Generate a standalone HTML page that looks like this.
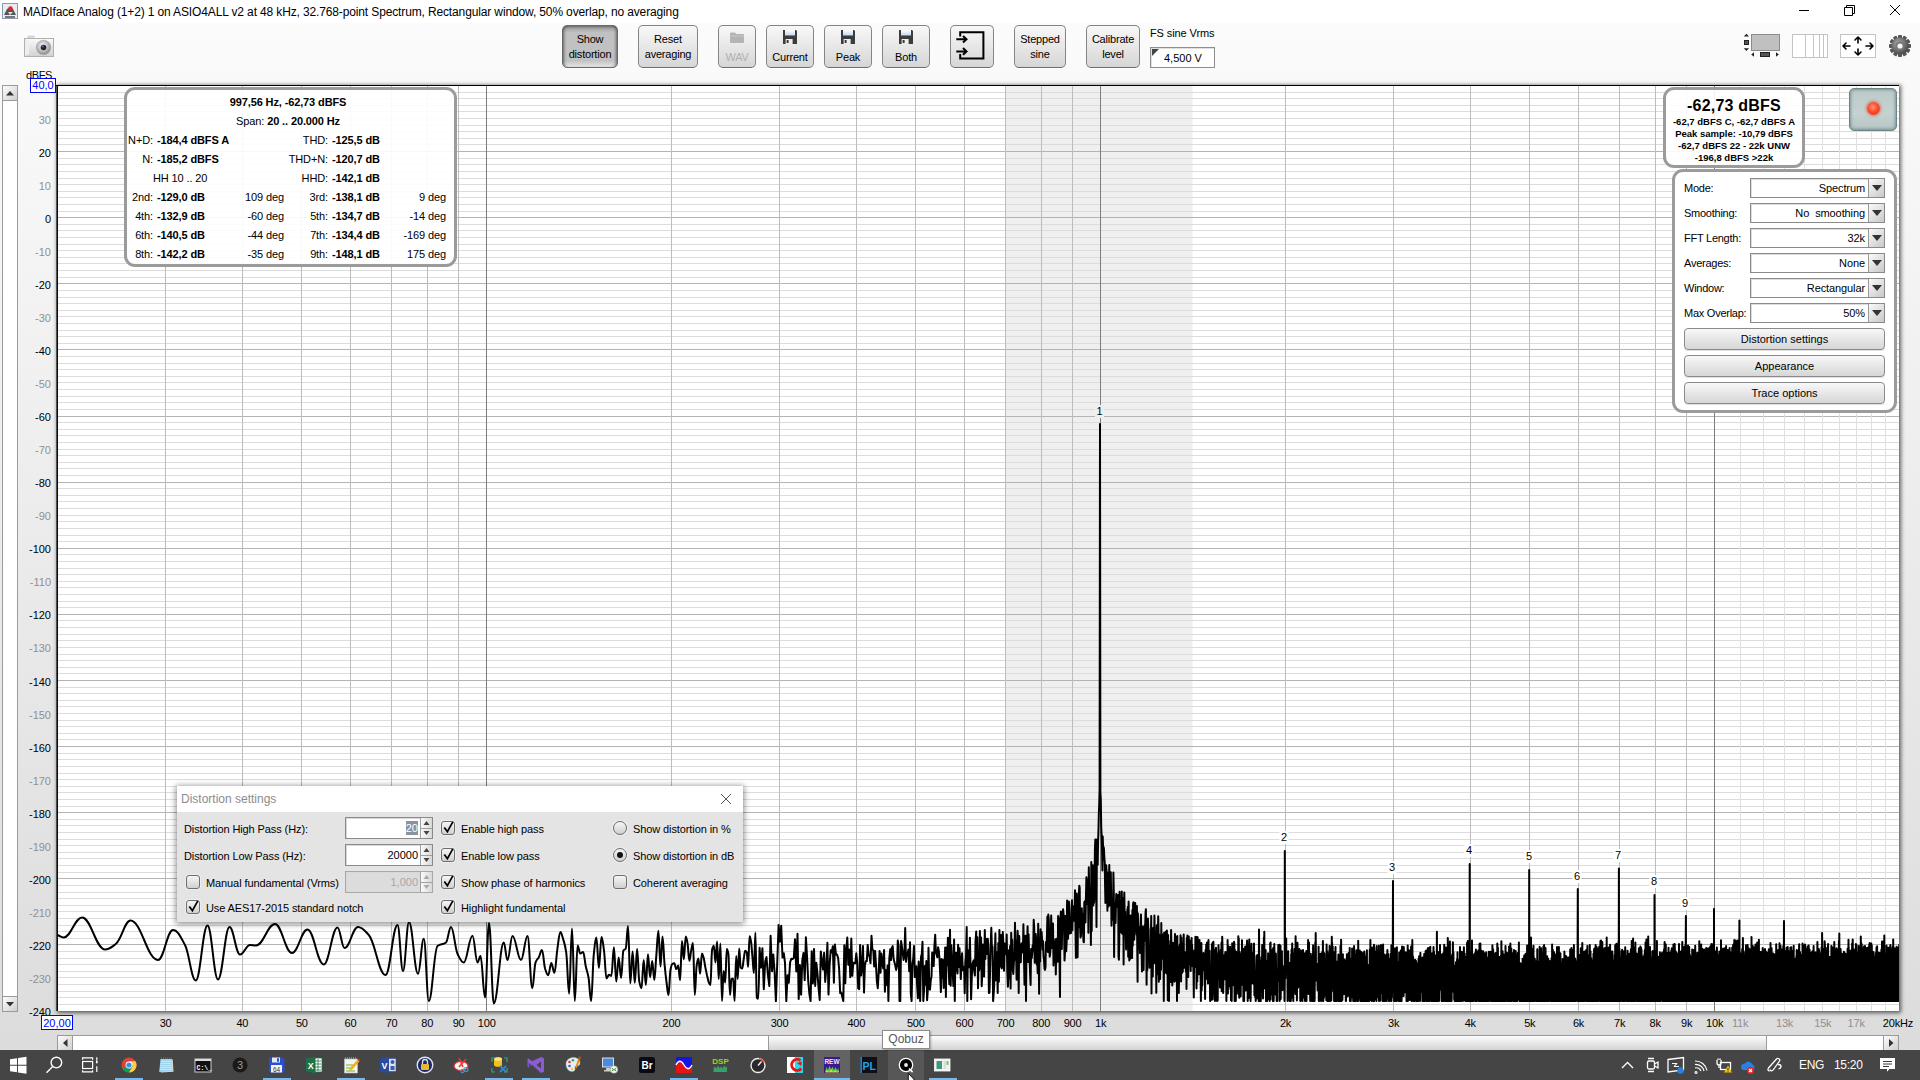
<!DOCTYPE html><html><head><meta charset="utf-8"><title>REW Spectrum</title><style>*{box-sizing:border-box;margin:0;padding:0}
html,body{width:1920px;height:1080px;overflow:hidden}
body{position:relative;font-family:"Liberation Sans",Arial,sans-serif;font-size:11px;color:#000;
 background:linear-gradient(to bottom,#fff 0,#fff 23px,#fbfbfb 23px,#dcdcdc 1050px,#dcdcdc 100%)}
.abs{position:absolute}
#plotshadow{position:absolute;left:57px;top:85px;width:1842px;height:926px;box-shadow:.5px .5px 4px 1px rgba(0,0,0,.6);background:#fff}
.yl{position:absolute;left:10px;width:41px;text-align:right;font-size:11px;line-height:14px;height:14px}
.yl.g,.xl.g{color:#909090}
.xl{position:absolute;top:1016px;width:40px;text-align:center;font-size:11px;line-height:14px;letter-spacing:-0.2px}
#titlebar{position:absolute;left:0;top:0;width:1920px;height:23px;background:#fff}
#ttl{left:23px;top:4px;font-size:12px;line-height:16px;white-space:nowrap;letter-spacing:-0.135px}
.tb{position:absolute;top:25px;height:43px;border:1px solid #858585;border-bottom-color:#6c6c6c;border-radius:5px;background:linear-gradient(to bottom,#f8f8f8,#d6d6d6);
 display:flex;flex-direction:column;align-items:center;justify-content:center;text-align:center;font-size:11px;letter-spacing:-0.2px;line-height:15px;box-shadow:0 1px 0 rgba(255,255,255,.7)}
.tb.sel{background:linear-gradient(to bottom,#747474 0,#a8a8a8 7%,#c1c1c1 16%,#c1c1c1 84%,#e6e6e6 100%);border-color:#6a6a6a;box-shadow:inset 3px 0 3px -2px rgba(0,0,0,.5),inset -3px 0 3px -2px rgba(0,0,0,.5)}
.tb.ic{justify-content:flex-start;padding-top:4px}
.tb.ic svg{display:block;margin-bottom:6px}
.tb.dis{color:#b0b0b0}
.sbv,.sbh{background:#fff;border:1px solid #9a9a9a}
.sbb{position:absolute;width:14px;height:14px;background:linear-gradient(135deg,#fdfdfd,#cfcfcf);border:0 solid #9a9a9a;display:flex;align-items:center;justify-content:center}
.sbv .sbb{left:0;border-bottom-width:1px;height:15px}
.sbv .sbb:last-child{border-bottom-width:0;border-top-width:1px}
.sbh .sbb{top:0;height:14px;border-right-width:1px}
.sbh .sbb:nth-child(2){border-right-width:0;border-left-width:1px}
.sbb svg{display:block}
.thumb{position:absolute;top:0;height:14px;background:linear-gradient(to bottom,#fcfcfc,#d4d4d4);border-left:1px solid #9a9a9a;border-right:1px solid #9a9a9a}
.bluebox{background:#fff;border:1px solid #00f;color:#00f;font-size:11px;line-height:13px;text-align:center}
.rbox{position:absolute;border:3px solid #9b9b9b;border-radius:11px;background:rgba(255,255,255,.9)}
#info{left:124px;top:87px;width:333px;height:180px}
.ir{position:absolute;left:0;width:327px;height:14px;line-height:14px;font-size:11px;white-space:nowrap;letter-spacing:-0.12px}
.ir.c{text-align:center;left:-2.5px}
.b,.ir b,.v1,.v2{font-weight:bold}
.ir span{position:absolute;top:0}
.l1{right:301px}.v1{left:30px}.d1{right:170px}.l2{right:126px}.v2{left:205px}.d2{right:8px}
#lvl{left:1663px;top:87px;width:142px;height:81px}
#lvl .big{position:absolute;left:0;width:136px;top:6px;text-align:center;font-weight:bold;font-size:16px;line-height:20px;letter-spacing:.2px}
#lvl .sm{position:absolute;left:-4px;width:144px;text-align:center;font-weight:bold;font-size:9.5px;line-height:12px;white-space:nowrap}
#rec{position:absolute;left:1849px;top:88px;width:48px;height:43px;border-radius:5px;border:1px solid #6d8585;background:linear-gradient(to bottom,#bccaca,#c6d2d2 60%,#b4c4c4);box-shadow:inset 0 0 3px 1px rgba(70,100,100,.55)}
#rec div{position:absolute;left:17px;top:13px;width:13px;height:13px;border-radius:50%;background:radial-gradient(circle at 45% 40%,#ff9a7a 0,#ff4a2a 45%,#e02810 100%);box-shadow:0 0 3px 1px rgba(240,60,30,.6)}
#ctl{left:1672px;top:169px;width:225px;height:244px;background:#fff}
.cl{position:absolute;left:9px;letter-spacing:-0.25px;font-size:11px;line-height:14px;white-space:nowrap}
.cb{position:absolute;left:75px;width:135px;height:20px;border:1px solid #8a8a8a;background:#fff;font-size:11px;line-height:18px;text-align:right;padding-right:19px;white-space:nowrap;letter-spacing:-0.1px;box-shadow:inset 1px 1px 0 #ddd}
.cb i{position:absolute;right:0;top:0;width:16px;height:18px;border-left:1px solid #9a9a9a;background:linear-gradient(135deg,#fafafa,#c8c8c8);display:flex;align-items:center;justify-content:center}
.btn{position:absolute;left:9px;width:201px;height:22px;border:1px solid #8a8a8a;border-radius:4px;background:linear-gradient(to bottom,#f8f8f8,#d6d6d6);text-align:center;font-size:11px;line-height:20px;box-shadow:0 1px 0 rgba(0,0,0,.12)}
#dlg{position:absolute;left:177px;top:786px;width:566px;height:136px;background:#e4e4e4;box-shadow:0 1px 6px 1px rgba(0,0,0,.45)}
#dlg .dt{position:absolute;left:0;top:0;width:566px;height:26px;background:#fff;color:#8c8c8c;font-size:12px;line-height:26px;padding-left:4px}
.dl{position:absolute;font-size:11px;line-height:14px;white-space:nowrap;letter-spacing:-0.1px}
.sp{position:absolute;left:168px;width:88px;height:22px;border:1px solid #8a8a8a;background:#fff;font-size:11px;line-height:20px;text-align:right;padding-right:14px;box-shadow:inset 1px 1px 0 #d8d8d8}
.sp i{position:absolute;right:0;top:0;width:12px;height:20px;border-left:1px solid #a0a0a0;background:linear-gradient(to right,#fafafa,#d8d8d8)}
.sp i svg{display:block}
.sp i:after{content:"";position:absolute;left:0;top:10px;width:11px;height:1px;background:#a0a0a0}
.sp.dis{background:#dcdcdc;color:#a8a8a8;border-color:#a8a8a8}
.sp .sel{background:#8a93a0;color:#fff;padding:1px 0}
.ck{position:absolute;width:14px;height:14px;border:1px solid #6e6e6e;border-radius:3px;background:linear-gradient(to bottom,#f6f6f6,#d0d0d0);box-shadow:0 0 0 1px rgba(255,255,255,.35)}
.ck svg{position:absolute;left:-1px;top:-1px;display:block}
.rd{position:absolute;width:14px;height:14px;border:1px solid #6e6e6e;border-radius:50%;background:linear-gradient(to bottom,#f6f6f6,#d0d0d0);box-shadow:0 0 0 1px rgba(255,255,255,.35)}
.rd.on:after{content:"";position:absolute;left:3px;top:3px;width:6px;height:6px;border-radius:50%;background:#111}
#tbar{position:absolute;left:0;top:1050px;width:1920px;height:30px;background:#454545;overflow:visible}
.ul{position:absolute;top:28px;height:2px;background:#76b9ed}
.tt{position:absolute;top:8px;color:#fff;font-size:12px;line-height:14px;text-align:center;white-space:nowrap;letter-spacing:-0.3px}
#tip{position:absolute;left:882px;top:1030px;width:48px;height:19px;background:#fff;border:1px solid #8c8c8c;color:#575757;font-size:12px;line-height:17px;text-align:center;box-shadow:1px 1px 2px rgba(0,0,0,.3)}
</style></head><body>
<div id="titlebar">
 <svg class="abs" style="left:2px;top:3px" width="16" height="16" viewBox="0 0 16 16">
  <rect x="0.5" y="0.5" width="15" height="15" fill="#e6ecf2" stroke="#8a9bb0"/>
  <path d="M2 12 L5 6 L8 4 L11 6 L14 12 Z" fill="#555"/>
  <path d="M3 13h10v2H3z" fill="#777"/>
  <circle cx="8.5" cy="5.5" r="2.2" fill="#e22"/>
  <path d="M6 9l2 3 3-3z" fill="#ddd"/>
 </svg>
 <div class="abs" id="ttl">MADIface Analog (1+2) 1 on ASIO4ALL v2 at 48 kHz, 32.768-point Spectrum, Rectangular window, 50% overlap, no averaging</div>
 <svg class="abs" style="left:1780px;top:0" width="140" height="23" viewBox="0 0 140 23" fill="none" stroke="#000" stroke-width="1">
  <path d="M19 10.5h10"/>
  <path d="M64.5 7.5h8v8h-8z M66.5 7.5v-2h8v8h-2"/>
  <path d="M110 5l10 10M120 5l-10 10"/>
 </svg>
</div>

<!-- camera button -->
<svg class="abs" style="left:22px;top:34px" width="36" height="26" viewBox="0 0 36 26">
 <defs><linearGradient id="cg" x1="0" x2="0" y1="0" y2="1"><stop offset="0" stop-color="#fafafa"/><stop offset="1" stop-color="#d2d2d2"/></linearGradient>
 <radialGradient id="lg" cx=".45" cy=".4" r=".6"><stop offset="0" stop-color="#fff"/><stop offset=".6" stop-color="#bbb"/><stop offset="1" stop-color="#888"/></radialGradient></defs>
 <rect x="6" y="2" width="6" height="3" fill="#ddd" stroke="#bbb" stroke-width=".5"/>
 <rect x="2.5" y="4.5" width="29" height="18" fill="url(#cg)" stroke="#b0b0b0"/>
 <path d="M3 5l4 2v13l-4 2z" fill="#eee"/>
 <circle cx="21.5" cy="13.5" r="7.3" fill="url(#lg)" stroke="#aaa" stroke-width=".6"/>
 <circle cx="21.5" cy="13.5" r="2.8" fill="#223"/>
 <circle cx="20.8" cy="12.6" r="1" fill="#57a"/>
</svg>
<div class="abs" style="left:26px;top:69px;font-size:11px;line-height:13px;letter-spacing:-0.4px">dBFS</div>

<div class="tb sel" style="left:562px;width:56px"><span>Show<br>distortion</span></div>
<div class="tb" style="left:638px;width:60px"><span>Reset<br>averaging</span></div>
<div class="tb ic dis" style="left:718px;width:38px">
 <svg width="16" height="14" viewBox="0 0 16 14"><path d="M1 3.5a1 1 0 0 1 1-1h4l1.2 1.5H14a1 1 0 0 1 1 1V12a1 1 0 0 1-1 1H2a1 1 0 0 1-1-1z" fill="#b4b4b4"/><path d="M1 6h14" stroke="#c8c8c8"/></svg>
 <span>WAV</span></div>
<div class="tb ic" style="left:766px;width:48px">
 <svg width="14" height="14" viewBox="0 0 14 14"><defs><linearGradient id="fg" x1="0" x2="0" y1="0" y2="1"><stop offset="0" stop-color="#fff"/><stop offset="1" stop-color="#c4d8ee"/></linearGradient></defs><path d="M0 0h13l1 1v13H0z" fill="#3c3c3c"/><rect x="2" y="0" width="10" height="5.500" fill="url(#fg)"/><rect x="2.600" y="9" width="7" height="5" fill="#eee"/><rect x="3.600" y="10" width="2" height="3" fill="#3c3c3c"/></svg>
 <span>Current</span></div>
<div class="tb ic" style="left:824px;width:48px">
 <svg width="14" height="14" viewBox="0 0 14 14"><defs><linearGradient id="fg" x1="0" x2="0" y1="0" y2="1"><stop offset="0" stop-color="#fff"/><stop offset="1" stop-color="#c4d8ee"/></linearGradient></defs><path d="M0 0h13l1 1v13H0z" fill="#3c3c3c"/><rect x="2" y="0" width="10" height="5.500" fill="url(#fg)"/><rect x="2.600" y="9" width="7" height="5" fill="#eee"/><rect x="3.600" y="10" width="2" height="3" fill="#3c3c3c"/></svg>
 <span>Peak</span></div>
<div class="tb ic" style="left:882px;width:48px">
 <svg width="14" height="14" viewBox="0 0 14 14"><defs><linearGradient id="fg" x1="0" x2="0" y1="0" y2="1"><stop offset="0" stop-color="#fff"/><stop offset="1" stop-color="#c4d8ee"/></linearGradient></defs><path d="M0 0h13l1 1v13H0z" fill="#3c3c3c"/><rect x="2" y="0" width="10" height="5.500" fill="url(#fg)"/><rect x="2.600" y="9" width="7" height="5" fill="#eee"/><rect x="3.600" y="10" width="2" height="3" fill="#3c3c3c"/></svg>
 <span>Both</span></div>
<div class="tb" style="left:950px;width:44px">
 <svg width="32" height="32" viewBox="0 0 32 32" fill="none" stroke="#000" stroke-width="2" style="margin-top:-2px"><path d="M4.200 6.600V2.200h23.200v26.400H4.200V24"/><path d="M0.300 9.300h10M7 6l3.500 3.300L7 12.600M0.300 21.400h10M7 18.100l3.500 3.300L7 24.700"/></svg>
</div>
<div class="tb" style="left:1014px;width:52px"><span>Stepped<br>sine</span></div>
<div class="tb" style="left:1086px;width:54px"><span>Calibrate<br>level</span></div>
<div class="abs" style="left:1150px;top:26px;font-size:11px;line-height:14px;letter-spacing:-0.1px">FS sine Vrms</div>
<div class="abs" style="left:1150px;top:47px;width:65px;height:21px;background:#fff;border:1px solid #8e8e8e;font-size:11px;line-height:20px;padding-left:13px;box-shadow:inset 1px 1px 0 #e0e0e0">4,500 V
 <svg class="abs" style="left:1px;top:1px" width="8" height="8"><path d="M0 0h7L0 7z" fill="#444"/></svg></div>

<!-- right icons -->
<svg class="abs" style="left:1740px;top:30px" width="180" height="32" viewBox="0 0 180 32">
 <defs><radialGradient id="gg" cx=".4" cy=".35" r=".7"><stop offset="0" stop-color="#aaa"/><stop offset="1" stop-color="#444"/></radialGradient></defs>
 <rect x="11.500" y="4.500" width="28" height="16" fill="#c0c0c0" stroke="#8c8c8c"/>
 <path d="M3.800 6.600l2.600-2.800 2.600 2.800zM3.800 18.200l2.600 2.800 2.600-2.800z" fill="#222"/>
 <rect x="4.500" y="10.500" width="4" height="4" fill="#555" stroke="#222"/>
 <path d="M14 22.200v4.600l-2.800-2.300zM36 22.200v4.600l2.800-2.300z" fill="#222"/>
 <rect x="20.500" y="22.500" width="9" height="4" fill="#555" stroke="#222"/>
 <rect x="52.500" y="4.500" width="35" height="23" fill="#fff" stroke="#c4c4c4"/>
 <path d="M65.500 4.500v23M73.500 4.500v23M79.500 4.500v23M83.500 4.500v23" stroke="#c4c4c4"/>
 <rect x="100.500" y="4.500" width="35" height="23" fill="#fff" stroke="#c4c4c4"/>
 <g stroke="#000" stroke-width="1.600" fill="none" stroke-linecap="round" stroke-linejoin="round"><path d="M103 16h7M106 13l-3 3 3 3M133 16h-7M130 13l3 3-3 3M118 7v6M115 10l3-3 3 3M118 25v-6M115 22l3 3 3-3"/></g>
 <g transform="translate(160 16)">
  <g fill="#555"><rect x="-2" y="-11" width="4" height="22" rx="1"/><rect x="-2" y="-11" width="4" height="22" rx="1" transform="rotate(30)"/><rect x="-2" y="-11" width="4" height="22" rx="1" transform="rotate(60)"/><rect x="-2" y="-11" width="4" height="22" rx="1" transform="rotate(90)"/><rect x="-2" y="-11" width="4" height="22" rx="1" transform="rotate(120)"/><rect x="-2" y="-11" width="4" height="22" rx="1" transform="rotate(150)"/></g>
  <circle r="8.500" fill="url(#gg)"/><circle r="4.500" fill="#777"/><circle r="2.600" fill="#f4f4f4"/>
 </g>
</svg>

<div id="plotshadow"></div>
<svg id="plot" width="1920" height="1050" viewBox="0 0 1920 1050" style="position:absolute;left:0;top:0">
<rect x="57" y="85" width="1842" height="926" fill="#fff"/>
<rect x="1005.5" y="85" width="187.0" height="926" fill="#efefef"/>
<path stroke="#dcdcdc" stroke-width="1" d="M57 92.5H1899M57 98.5H1899M57 105.5H1899M57 111.5H1899M57 118.5H1899M57 125.5H1899M57 131.5H1899M57 138.5H1899M57 144.5H1899M57 158.5H1899M57 164.5H1899M57 171.5H1899M57 178.5H1899M57 184.5H1899M57 191.5H1899M57 197.5H1899M57 204.5H1899M57 211.5H1899M57 224.5H1899M57 230.5H1899M57 237.5H1899M57 244.5H1899M57 250.5H1899M57 257.5H1899M57 263.5H1899M57 270.5H1899M57 277.5H1899M57 290.5H1899M57 297.5H1899M57 303.5H1899M57 310.5H1899M57 316.5H1899M57 323.5H1899M57 330.5H1899M57 336.5H1899M57 343.5H1899M57 356.5H1899M57 363.5H1899M57 369.5H1899M57 376.5H1899M57 382.5H1899M57 389.5H1899M57 396.5H1899M57 402.5H1899M57 409.5H1899M57 422.5H1899M57 429.5H1899M57 435.5H1899M57 442.5H1899M57 449.5H1899M57 455.5H1899M57 462.5H1899M57 468.5H1899M57 475.5H1899M57 488.5H1899M57 495.5H1899M57 501.5H1899M57 508.5H1899M57 515.5H1899M57 521.5H1899M57 528.5H1899M57 535.5H1899M57 541.5H1899M57 554.5H1899M57 561.5H1899M57 568.5H1899M57 574.5H1899M57 581.5H1899M57 587.5H1899M57 594.5H1899M57 601.5H1899M57 607.5H1899M57 620.5H1899M57 627.5H1899M57 634.5H1899M57 640.5H1899M57 647.5H1899M57 654.5H1899M57 660.5H1899M57 667.5H1899M57 673.5H1899M57 687.5H1899M57 693.5H1899M57 700.5H1899M57 706.5H1899M57 713.5H1899M57 720.5H1899M57 726.5H1899M57 733.5H1899M57 739.5H1899M57 753.5H1899M57 759.5H1899M57 766.5H1899M57 773.5H1899M57 779.5H1899M57 786.5H1899M57 792.5H1899M57 799.5H1899M57 806.5H1899M57 819.5H1899M57 825.5H1899M57 832.5H1899M57 839.5H1899M57 845.5H1899M57 852.5H1899M57 858.5H1899M57 865.5H1899M57 872.5H1899M57 885.5H1899M57 892.5H1899M57 898.5H1899M57 905.5H1899M57 911.5H1899M57 918.5H1899M57 925.5H1899M57 931.5H1899M57 938.5H1899M57 951.5H1899M57 958.5H1899M57 964.5H1899M57 971.5H1899M57 977.5H1899M57 984.5H1899M57 991.5H1899M57 997.5H1899M57 1004.5H1899"/>
<path stroke="#b4b4b4" stroke-width="1" d="M57 151.5H1899M57 217.5H1899M57 283.5H1899M57 349.5H1899M57 416.5H1899M57 482.5H1899M57 548.5H1899M57 614.5H1899M57 680.5H1899M57 746.5H1899M57 812.5H1899M57 878.5H1899M57 944.5H1899"/>
<path stroke="#e0e0e0" stroke-width="1" d="M1740.5 85V1011M1763.5 85V1011M1784.5 85V1011M1804.5 85V1011M1822.5 85V1011M1839.5 85V1011M1856.5 85V1011M1871.5 85V1011M1885.5 85V1011"/>
<path stroke="#bcbcbc" stroke-width="1" d="M165.5 85V1011M242.5 85V1011M301.5 85V1011M350.5 85V1011M391.5 85V1011M427.5 85V1011M458.5 85V1011M671.5 85V1011M779.5 85V1011M856.5 85V1011M915.5 85V1011M964.5 85V1011M1005.5 85V1011M1041.5 85V1011M1072.5 85V1011M1285.5 85V1011M1393.5 85V1011M1470.5 85V1011M1529.5 85V1011M1578.5 85V1011M1619.5 85V1011M1655.5 85V1011M1686.5 85V1011"/>
<path stroke="#7c7c7c" stroke-width="1" d="M486.5 85V1011M1100.5 85V1011M1714.5 85V1011"/>
<clipPath id="pc"><rect x="57.5" y="85.5" width="1841.5" height="925.5"/></clipPath>
<path clip-path="url(#pc)" fill="none" stroke="#000" stroke-width="2" stroke-linejoin="round" stroke-linecap="round" d="M57.5 935.0C60.0 936.0 61.2 937.5 63.8 937.5C71.0 937.5 74.7 917.5 82.0 917.5C91.2 917.5 95.8 949.5 105.0 949.5C109.4 949.5 111.6 947.1 116.0 943.8C121.8 939.3 124.7 920.5 130.5 920.5C141.5 920.5 147.0 960.0 158.0 960.0C164.0 960.0 167.0 930.0 173.0 930.0C177.8 930.0 180.2 936.2 185.0 945.0C189.3 952.9 191.4 980.5 195.8 980.5C200.4 980.5 202.8 925.5 207.5 925.5C211.7 925.5 213.8 979.5 218.0 979.5C222.6 979.5 224.9 927.0 229.5 927.0C233.7 927.0 235.8 954.5 240.0 954.5C244.0 954.5 246.0 945.0 250.0 945.0C252.4 945.0 253.6 945.5 256.0 945.5C263.6 945.5 267.4 924.0 275.0 924.0C281.8 924.0 285.2 953.0 292.0 953.0C298.2 953.0 301.3 929.5 307.5 929.5C314.0 929.5 317.2 964.5 323.8 964.5C329.2 964.5 332.0 927.5 337.5 927.5C340.3 927.5 341.7 948.0 344.5 948.0C349.9 948.0 352.6 927.0 358.0 927.0C362.3 927.0 364.4 930.3 368.8 935.0C375.4 942.3 378.8 975.0 385.5 975.0C390.3 975.0 392.7 925.0 397.5 925.0C399.7 925.0 400.8 971.0 403.0 971.0C405.4 971.0 406.6 922.0 409.0 922.0C412.6 922.0 414.4 973.8 418.0 973.8C420.3 973.8 421.4 938.8 423.8 938.8C425.8 938.8 426.8 1001.0 428.8 1001.0C432.2 1001.0 434.0 948.7 437.5 946.0C440.9 943.4 442.6 945.1 446.0 942.5C448.0 940.9 449.0 927.0 451.0 927.0C453.6 927.0 454.9 948.3 457.5 953.8C460.0 959.0 461.2 962.5 463.8 962.5C467.2 962.5 469.0 935.8 472.5 935.8C474.5 935.8 475.5 962.5 477.5 962.5C478.7 962.5 479.3 956.0 480.5 956.0C482.3 956.0 483.2 997.5 485.0 997.5C486.6 997.5 487.4 923.0 489.0 923.0C490.9 923.0 491.9 1003.5 493.8 1003.5C497.8 1003.5 499.8 942.5 503.8 942.5C505.2 942.5 506.0 960.0 507.5 960.0C509.5 960.0 510.5 936.0 512.5 936.0C515.9 936.0 517.6 960.0 521.0 960.0C523.6 960.0 524.9 936.0 527.5 936.0C529.4 936.0 530.4 988.2 532.3 988.2C533.6 988.2 534.2 966.2 535.5 962.6C536.8 959.0 537.5 959.7 538.8 957.2C540.1 954.8 540.7 950.1 542.0 950.1C543.2 950.1 543.9 964.8 545.1 968.7C546.4 972.5 547.0 975.2 548.2 975.2C549.5 975.2 550.1 963.1 551.3 963.1C552.5 963.1 553.2 972.8 554.4 972.8C555.6 972.8 556.2 956.7 557.4 948.8C558.6 940.9 559.2 932.0 560.4 932.0C561.5 932.0 562.1 935.8 563.3 939.6C564.5 943.4 565.1 944.5 566.2 952.3C567.4 960.0 568.0 993.7 569.1 993.7C570.3 993.7 570.8 928.5 572.0 928.5C573.1 928.5 573.7 1001.1 574.8 1001.1C575.9 1001.1 576.5 945.4 577.6 945.4C578.7 945.4 579.2 953.6 580.3 953.6C581.4 953.6 582.0 952.0 583.1 952.0C584.2 952.0 584.7 961.5 585.8 966.5C586.9 971.4 587.4 971.4 588.5 977.3C589.5 983.2 590.1 1001.1 591.1 1001.1C592.2 1001.1 592.7 965.8 593.7 955.4C594.8 945.1 595.3 937.4 596.3 937.4C597.4 937.4 597.9 967.8 598.9 967.8C599.9 967.8 600.5 936.9 601.5 936.9C602.5 936.9 603.0 943.3 604.0 950.7C605.0 958.0 605.5 978.5 606.5 978.5C607.5 978.5 608.0 974.8 609.0 974.8C610.0 974.8 610.5 975.9 611.4 975.9C612.4 975.9 612.9 947.2 613.9 947.2C614.8 947.2 615.3 981.6 616.3 981.6C617.2 981.6 617.7 957.4 618.7 957.4C619.6 957.4 620.1 978.1 621.1 978.1C622.0 978.1 622.5 952.1 623.4 950.6C624.3 949.2 624.8 950.1 625.7 948.7C626.7 947.2 627.1 926.0 628.0 926.0C629.0 926.0 629.4 983.4 630.3 983.4C631.2 983.4 631.7 951.5 632.6 951.5C633.5 951.5 633.9 982.7 634.8 982.7C635.7 982.7 636.2 949.0 637.1 949.0C638.0 949.0 638.4 977.2 639.3 981.6C640.2 986.1 640.6 988.3 641.5 988.3C642.4 988.3 642.8 960.1 643.7 960.1C644.5 960.1 645.0 985.0 645.8 985.0C646.7 985.0 647.1 954.3 648.0 954.3C648.8 954.3 649.2 977.3 650.1 977.3C650.9 977.3 651.4 961.1 652.2 961.1C653.0 961.1 653.5 980.0 654.3 980.0C655.1 980.0 655.5 964.4 656.4 954.6C657.2 944.7 657.6 930.7 658.4 930.7C659.2 930.7 659.7 966.6 660.5 966.6C661.3 966.6 661.7 936.5 662.5 936.5C663.3 936.5 663.7 954.7 664.5 963.6C665.3 972.3 665.7 975.9 666.5 982.0C667.3 988.1 667.7 995.1 668.5 995.1C669.3 995.1 669.7 973.7 670.5 969.8C671.2 966.0 671.6 964.3 672.4 963.9C673.2 963.4 673.6 963.3 674.3 963.3C675.1 963.3 675.5 969.1 676.3 969.1C677.0 969.1 677.4 965.6 678.2 965.6C678.9 965.6 679.3 980.2 680.1 980.2C680.8 980.2 681.2 941.1 682.0 941.1C682.7 941.1 683.1 959.4 683.8 959.4C684.6 959.4 685.0 936.4 685.7 936.4C686.4 936.4 686.8 939.1 687.5 943.0C688.3 946.8 688.6 960.7 689.4 960.7C690.1 960.7 690.5 953.9 691.2 950.4C691.9 947.0 692.3 943.0 693.0 943.0C693.7 943.0 694.1 995.0 694.8 995.0C695.5 995.0 695.9 970.9 696.6 966.1C697.3 961.4 697.6 958.6 698.4 958.6C699.1 958.6 699.4 973.8 700.1 973.8C700.8 973.8 701.2 953.5 701.9 953.5C702.6 953.5 702.9 955.3 703.6 957.6C704.3 959.9 704.6 963.6 705.3 967.1C706.0 970.6 706.4 972.3 707.0 975.2C707.7 978.2 708.1 980.4 708.7 982.1C709.4 983.8 709.8 985.1 710.4 985.1C711.1 985.1 711.4 952.5 712.1 949.7C712.8 946.9 713.1 945.8 713.8 945.8C714.5 945.8 714.8 962.6 715.5 962.6C716.1 962.6 716.4 941.5 717.1 941.5C717.8 941.5 718.1 979.0 718.7 979.0C719.4 979.0 719.7 943.6 720.4 943.6C721.0 943.6 721.4 1001.1 722.0 1001.1C722.6 1001.1 723.0 970.9 723.6 970.9C724.3 970.9 724.6 982.6 725.2 982.6C725.8 982.6 726.2 949.0 726.8 949.0C727.4 949.0 727.8 950.4 728.4 954.0C729.0 957.5 729.3 995.0 730.0 995.0C730.6 995.0 730.9 979.6 731.5 979.1C732.1 978.6 732.5 978.4 733.1 978.4C733.7 978.4 734.0 1001.1 734.6 1001.1C735.2 1001.1 735.5 955.9 736.2 955.9C736.8 955.9 737.1 979.0 737.7 979.0C738.3 979.0 738.6 948.6 739.2 948.6C739.8 948.6 740.1 966.8 740.7 967.6C741.3 968.3 741.6 968.5 742.2 968.5C742.8 968.5 743.1 962.8 743.7 959.2C744.3 955.7 744.6 950.8 745.2 950.8C745.8 950.8 746.1 951.2 746.7 952.3C747.3 953.4 747.6 966.8 748.1 966.8C748.7 966.8 749.0 936.3 749.6 936.3C750.2 936.3 750.5 938.6 751.1 942.0C751.6 945.3 751.9 951.5 752.5 957.7C753.1 963.9 753.4 973.1 753.9 973.1C754.5 973.1 754.8 932.6 755.4 932.6C755.9 932.6 756.2 996.9 756.8 997.7C757.4 998.6 757.6 998.8 758.2 998.8C758.8 998.8 759.1 968.1 759.6 947.7L761.0 967.6L762.4 948.2L763.8 989.3L765.2 961.2L766.5 957.1L767.9 974.8L769.3 985.9L770.6 935.8L772.0 971.3L773.3 954.4L774.6 972.1L775.9 1001.1L777.3 961.3L778.6 925.0L779.9 941.7L781.2 925.8L782.5 957.4L783.8 953.3L785.0 962.9L786.3 1001.1L787.6 975.2L788.8 982.7L790.1 962.4L791.3 958.8L792.6 959.1L793.8 957.9L795.0 939.2L796.3 971.4L797.5 933.8L798.7 998.9L799.9 965.1L801.1 994.6L802.3 960.5L803.5 953.0L804.7 980.3L805.9 937.2L807.1 957.9L808.2 980.4L809.4 994.2L810.6 1001.1L811.7 951.3L812.9 983.4L814.0 948.9L815.2 985.9L816.3 962.8L817.4 972.7L818.6 988.3L819.7 1000.0L820.8 951.4L821.9 960.9L823.0 969.5L824.1 952.7L825.2 982.0L826.3 968.4L827.4 942.7L828.5 994.6L829.6 965.1L830.7 950.3L831.7 952.5L832.8 946.3L833.9 982.7L834.9 944.6L836.0 954.6L837.0 954.5L838.1 957.9L839.1 968.5L840.2 993.1L841.2 992.6L842.2 996.4L843.3 1001.1L844.3 945.2L845.3 983.3L846.3 949.1L847.3 937.6L848.3 964.7L849.3 949.4L850.3 977.3L851.3 938.5L852.3 975.8L853.3 962.8L854.3 963.0L855.3 963.3L856.3 953.3L857.2 962.5L858.2 988.5L859.2 989.1L860.1 945.1L861.1 975.5L862.1 967.5L863.0 945.9L864.0 992.6L864.9 965.2L865.9 961.1L866.8 961.1L867.7 944.9L868.7 954.8L869.6 956.7L870.5 963.1L871.5 935.7L872.4 949.5L873.3 950.2L874.2 966.5L875.1 950.9L876.0 965.1L876.9 981.9L877.8 988.2L878.7 972.8L879.6 950.9L880.5 972.7L881.4 953.5L882.3 962.8L883.2 968.4L884.1 950.0L884.9 991.7L885.8 969.9L886.7 984.9L887.6 965.4L888.4 1001.1L889.3 958.6L890.2 949.3L891.0 960.1L891.9 947.6L892.7 946.1L893.6 958.6L894.4 962.1L895.3 965.5L896.1 969.9L897.0 966.1L897.8 940.6L898.6 945.9L899.5 1001.1L900.3 1001.1L901.1 941.0L901.9 946.5L902.8 953.3L903.6 959.9L904.4 955.5L905.2 928.0L906.0 961.8L906.8 953.9L907.6 953.1L908.4 949.6L909.2 971.2L910.0 942.3L910.8 993.8L911.6 1001.1L912.4 963.9L913.2 959.0L914.0 946.0L914.8 977.1L915.6 969.4L916.4 966.3L917.1 984.9L917.9 998.3L918.7 961.6L919.5 985.6L920.2 1001.1L921.0 956.9L921.8 954.1L922.5 941.8L923.3 1001.1L924.0 990.9L924.8 966.1L925.6 984.7L926.3 961.0L927.1 1000.3L927.8 990.4L928.5 947.8L929.3 988.0L930.0 989.7L930.8 979.8L931.5 976.6L932.2 952.5L933.0 958.5L933.7 966.1L934.4 946.3L935.2 934.7L935.9 952.1L936.6 954.4L937.3 957.3L938.1 947.2L938.8 950.7L939.5 958.3L940.2 974.3L940.9 992.1L941.6 958.9L942.3 977.8L943.0 960.0L943.7 988.0L944.5 964.6L945.2 947.4L945.9 997.1L946.5 947.4L947.2 964.9L947.9 937.8L948.6 967.5L949.3 984.3L950.0 929.7L950.7 985.7L951.4 945.3L952.1 960.7L952.7 972.4L953.4 986.1L954.1 939.4L954.8 1001.1L955.4 955.5L956.1 952.7L956.8 966.7L957.5 973.4L958.1 944.8L958.8 966.9L959.5 948.2L960.1 961.0L960.8 979.1L961.4 963.9L962.1 953.3L962.8 970.3L963.4 966.6L964.1 967.1L964.7 993.2L965.4 961.8L966.0 956.6L966.7 926.9L967.3 1001.1L967.9 950.2L968.6 965.8L969.2 967.2L969.9 937.8L970.5 964.8L971.1 999.3L971.8 977.3L972.4 964.2L973.0 961.9L973.7 960.4L974.3 971.7L974.9 975.5L975.5 942.1L976.2 931.6L976.8 965.8L977.4 937.2L978.0 988.3L978.7 954.9L979.3 970.2L979.9 931.0L980.5 968.2L981.1 937.6L981.7 986.2L982.3 973.4L982.9 944.6L983.5 971.1L984.1 976.4L984.8 930.0L985.4 958.9L986.0 939.5L986.6 938.9L987.2 953.9L987.8 938.8L988.3 947.8L988.9 993.1L989.5 992.7L990.1 970.0L990.7 944.5L991.3 927.8L991.9 948.4L992.5 946.2L993.1 1001.1L993.7 993.1L994.2 985.8L994.8 957.3L995.4 933.2L996.0 980.3L996.6 952.1L997.1 963.9L997.7 993.0L998.3 943.1L998.9 981.8L999.4 929.9L1000.0 966.8L1000.6 964.9L1001.1 935.0L1001.7 968.6L1002.3 966.3L1002.8 932.0L1003.4 945.5L1004.0 970.8L1004.5 943.6L1005.1 945.1L1005.6 954.2L1006.2 951.1L1006.7 934.4L1007.3 972.1L1007.9 986.8L1008.4 975.7L1009.0 950.2L1009.5 978.3L1010.1 946.0L1010.6 988.4L1011.2 932.7L1011.7 952.2L1012.2 939.7L1012.8 970.1L1013.3 973.9L1013.9 961.8L1014.4 959.1L1015.0 922.7L1015.5 959.6L1016.0 946.5L1016.6 979.8L1017.1 946.8L1017.6 930.8L1018.2 943.2L1018.7 993.0L1019.2 936.0L1019.8 958.1L1020.3 961.0L1020.8 962.3L1021.3 944.5L1021.9 943.2L1022.4 948.5L1022.9 952.5L1023.4 924.2L1024.0 959.1L1024.5 984.7L1025.0 946.4L1025.5 935.7L1026.0 1001.1L1026.5 944.6L1027.1 944.1L1027.6 926.2L1028.1 962.0L1028.6 934.2L1029.1 956.9L1029.6 959.0L1030.1 974.1L1030.6 984.9L1031.1 949.0L1031.7 958.2L1032.2 953.6L1032.7 945.2L1033.2 950.6L1033.7 919.8L1034.2 927.9L1034.7 962.7L1035.2 937.1L1035.7 933.9L1036.2 940.1L1036.7 964.5L1037.2 960.1L1037.7 973.2L1038.2 923.8L1038.6 946.6L1039.1 993.8L1039.6 946.4L1040.1 961.5L1040.6 929.3L1041.1 939.6L1041.6 931.9L1042.1 940.5L1042.6 949.6L1043.0 941.1L1043.5 956.0L1044.0 959.7L1044.5 968.6L1045.0 969.9L1045.5 967.1L1045.9 941.9L1046.4 951.1L1046.9 937.4L1047.4 916.5L1047.9 952.1L1048.3 914.6L1048.8 919.3L1049.3 945.3L1049.7 956.7L1050.2 953.9L1050.7 944.6L1051.2 915.6L1051.6 933.2L1052.1 947.9L1052.6 945.2L1053.0 923.6L1053.5 965.5L1054.0 942.8L1054.4 942.0L1054.9 961.7L1055.4 939.3L1055.8 974.4L1056.3 946.0L1056.7 938.8L1057.2 943.9L1057.7 961.7L1058.1 915.9L1058.6 920.1L1059.0 935.4L1059.5 958.8L1060.0 997.0L1060.4 918.6L1060.9 911.4L1061.3 946.3L1061.8 949.0L1062.2 925.3L1062.7 913.0L1063.1 909.3L1063.6 914.8L1064.0 922.5L1064.5 960.6L1064.9 955.1L1065.4 916.1L1065.8 936.3L1066.2 951.3L1066.7 941.3L1067.1 900.5L1067.6 936.7L1068.0 938.8L1068.5 921.4L1068.9 901.6L1069.3 916.2L1069.8 933.4L1070.2 922.6L1070.7 927.2L1071.1 932.9L1071.5 907.7L1072.0 900.2L1072.4 930.2L1072.8 906.0L1073.3 911.1L1073.7 915.1L1074.1 920.8L1074.6 910.5L1075.0 890.2L1075.4 921.4L1075.9 957.8L1076.3 953.3L1076.7 893.4L1077.1 935.6L1077.6 957.3L1078.0 918.9L1078.4 927.1L1078.8 894.7L1079.3 885.7L1079.7 887.8L1080.1 926.8L1080.5 937.4L1080.9 936.4L1081.4 923.5L1081.8 908.2L1082.2 920.1L1082.6 913.5L1083.0 931.3L1083.5 941.5L1083.9 942.3L1084.3 902.5L1084.7 901.2L1085.1 914.6L1085.5 922.5L1085.9 898.4L1086.4 877.2L1086.8 880.4L1087.2 904.0L1087.6 891.1L1088.0 880.8L1088.4 932.8L1088.8 867.3L1089.2 891.3L1089.6 911.3L1090.0 891.0L1090.4 898.6L1090.9 945.1L1091.3 862.0L1091.7 931.0L1092.1 886.5L1092.5 890.8L1092.9 865.3L1093.3 905.5L1093.7 881.0L1094.1 902.7L1094.5 894.8L1094.9 850.2L1095.3 839.4L1095.7 897.1L1096.1 872.6L1096.5 926.9L1096.9 839.4L1097.3 860.3L1097.7 864.7L1098.1 840.4L1098.4 833.5L1098.8 814.7L1099.2 804.6L1099.6 789.1L1100.0 424.0L1100.4 792.6L1100.8 799.1L1101.2 826.6L1101.6 834.7L1102.0 846.9L1102.4 870.5L1102.7 836.4L1103.1 847.2L1103.5 846.7L1103.9 848.5L1104.3 856.6L1104.7 862.1L1105.1 886.4L1105.4 903.1L1105.8 871.3L1106.2 865.2L1106.6 871.1L1107.0 872.5L1107.4 910.7L1107.7 891.6L1108.1 873.6L1108.5 906.4L1108.9 883.4L1109.3 864.9L1109.6 905.2L1110.0 899.2L1110.4 891.7L1110.8 872.2L1111.1 893.3L1111.5 925.7L1111.9 903.0L1112.3 904.5L1112.6 915.2L1113.0 919.7L1113.4 872.5L1113.8 894.3L1114.1 956.9L1114.5 906.7L1114.9 902.9L1115.2 920.7L1115.6 923.0L1116.0 901.5L1116.3 893.9L1116.7 902.1L1117.1 895.2L1117.4 897.0L1117.8 907.4L1118.2 894.9L1118.5 956.3L1118.9 959.7L1119.3 941.0L1119.6 891.7L1120.0 924.2L1120.4 928.0L1120.7 932.2L1121.1 900.7L1121.5 929.4L1121.8 891.6L1122.2 933.8L1122.5 910.0L1122.9 913.8L1123.3 897.8L1123.6 964.5L1124.0 906.6L1124.3 892.5L1124.7 917.8L1125.0 911.7L1125.4 922.0L1125.8 933.1L1126.1 949.6L1126.5 917.1L1126.8 943.5L1127.2 911.1L1127.5 909.8L1127.9 906.7L1128.2 956.8L1128.6 901.6L1128.9 929.6L1129.3 960.5L1129.6 915.5L1130.0 915.7L1130.3 958.8L1130.7 917.7L1131.0 944.8L1131.4 940.7L1131.7 915.2L1132.1 958.0L1132.4 910.0L1132.8 945.8L1133.1 903.7L1133.5 902.2L1133.8 923.6L1134.2 939.7L1134.5 930.1L1134.8 906.4L1135.2 903.0L1135.5 915.9L1135.9 914.0L1136.2 925.9L1136.6 934.8L1136.9 906.1L1137.2 942.4L1137.6 981.7L1137.9 913.2L1138.3 936.4L1138.6 949.1L1138.9 928.5L1139.3 933.4L1139.6 926.9L1139.9 952.9L1140.3 931.5L1140.6 922.3L1141.0 914.4L1141.3 945.3L1141.6 950.7L1142.0 971.4L1142.3 952.4L1142.6 926.5L1143.0 932.8L1143.3 948.1L1143.6 969.9L1144.0 930.2L1144.3 941.2L1144.6 925.3L1145.0 933.8L1145.3 921.8L1145.6 911.8L1145.9 909.3L1146.3 947.4L1146.6 984.8L1146.9 932.2L1147.3 970.2L1147.6 943.4L1147.9 918.6L1148.2 927.1L1148.6 929.3L1148.9 947.9L1149.2 949.2L1149.5 967.7L1149.9 955.0L1150.2 956.2L1150.5 953.4L1150.8 950.7L1151.2 916.1L1151.5 993.6L1151.8 944.6L1152.1 949.9L1152.5 958.1L1152.8 976.4L1153.1 928.0L1153.4 931.5L1153.7 935.0L1154.1 963.2L1154.4 915.6L1154.7 928.5L1155.0 958.8L1155.3 941.4L1155.7 955.1L1156.0 956.9L1156.3 992.8L1156.6 940.2L1156.9 925.2L1157.2 961.8L1157.6 974.2L1157.9 935.5L1158.2 916.2L1158.5 929.0L1158.8 981.8L1159.1 934.4L1159.4 941.8L1159.8 978.7L1160.1 979.0L1160.4 935.3L1160.7 941.1L1161.0 969.7L1161.3 922.9L1161.6 951.2L1161.9 933.9L1162.2 936.2L1162.6 941.4L1162.9 959.0L1163.2 949.7L1163.5 959.2L1163.8 1001.1L1164.1 932.8L1164.4 953.2L1164.7 962.5L1165.0 972.5L1165.3 971.9L1165.6 931.7L1165.9 960.6L1166.2 949.7L1166.6 973.4L1166.9 930.4L1167.2 965.8L1167.5 960.6L1167.8 1000.2L1168.1 935.1L1168.4 979.9L1168.7 940.9L1169.0 1001.1L1169.3 950.2L1169.6 952.1L1169.9 945.9L1170.2 953.7L1170.5 982.1L1170.8 957.5L1171.1 930.1L1171.4 946.4L1171.7 954.0L1172.0 962.6L1172.3 985.6L1172.6 971.1L1172.9 942.8L1173.2 976.5L1173.5 962.6L1173.8 955.1L1174.1 956.9L1174.4 981.8L1174.7 952.0L1175.0 934.1L1175.3 976.5L1175.6 980.7L1175.8 976.0L1176.1 937.2L1176.4 949.2L1176.7 947.2L1177.0 1001.1L1177.3 936.0L1177.6 964.5L1177.9 984.2L1178.2 985.9L1178.5 947.5L1178.8 993.1L1179.1 976.8L1179.4 969.9L1179.6 947.6L1179.9 944.4L1180.2 967.4L1180.5 935.3L1180.8 953.5L1181.1 981.5L1181.4 937.6L1181.7 950.0L1182.0 973.1L1182.3 944.0L1182.5 964.3L1182.8 971.7L1183.1 956.3L1183.4 963.9L1183.7 934.4L1184.0 967.8L1184.3 962.1L1184.5 961.5L1184.8 957.7L1185.1 957.4L1185.4 952.3L1185.7 968.1L1186.0 972.0L1186.2 952.1L1186.5 989.1L1186.8 937.9L1187.1 965.7L1187.4 935.4L1187.7 967.9L1187.9 941.0L1188.2 976.9L1188.5 958.9L1188.8 936.6L1189.1 963.2L1189.3 964.2L1189.6 940.4L1189.9 944.6L1190.2 949.7L1190.5 954.3L1190.7 970.9L1191.0 942.7L1191.3 960.6L1191.6 937.9L1191.9 966.0L1192.1 945.0L1192.4 958.5L1192.7 953.7L1193.0 958.5L1193.2 963.4L1193.5 973.0L1193.8 997.4L1194.1 956.7L1194.3 950.5L1194.6 967.2L1194.9 962.0L1195.2 957.5L1195.4 936.8L1195.7 959.7L1196.0 955.1L1196.3 948.0L1196.5 988.4L1196.8 936.9L1197.1 951.6L1197.3 981.4L1197.6 937.3L1197.9 971.9L1198.2 955.7L1198.4 964.6L1198.7 957.8L1199.0 974.2L1199.2 945.4L1199.5 940.0L1199.8 972.4L1200.1 956.9L1200.3 950.9L1200.6 974.2L1200.9 1001.1L1201.1 964.3L1201.4 942.9L1201.7 990.5L1201.9 960.5L1202.2 985.8L1202.5 954.4L1202.7 961.5L1203.0 970.2L1203.3 955.3L1203.5 952.9L1203.8 955.2L1204.1 963.8L1204.3 962.9L1204.6 965.6L1204.9 984.8L1205.1 998.9L1205.4 965.6L1205.6 950.0L1205.9 969.8L1206.2 944.4L1206.4 960.0L1206.7 978.2L1207.0 942.6L1207.2 958.6L1207.5 979.4L1207.7 946.7L1208.0 983.5L1208.3 969.1L1208.5 940.1L1208.8 977.4L1209.0 957.9L1209.3 955.7L1209.6 950.7L1209.8 971.3L1210.1 1001.1L1210.3 1001.1L1210.6 966.2L1210.9 1000.3L1211.1 971.8L1211.4 991.4L1211.6 988.8L1211.9 944.5L1212.2 958.5L1212.4 943.0L1212.7 999.5L1212.9 994.7L1213.2 958.5L1213.4 941.7L1213.7 963.7L1213.9 949.2L1214.2 973.4L1214.5 952.6L1214.7 958.0L1215.0 1001.1L1215.2 980.0L1215.5 976.9L1215.7 954.3L1216.0 947.8L1216.2 986.2L1216.5 972.3L1216.7 963.2L1217.0 1001.1L1217.2 994.6L1217.5 953.3L1217.7 1000.6L1218.0 955.4L1218.3 960.9L1218.5 945.3L1218.8 959.7L1219.0 978.7L1219.3 955.2L1219.5 951.5L1219.8 966.7L1220.0 987.4L1220.3 975.9L1220.5 978.1L1220.8 949.7L1221.0 968.1L1221.3 976.9L1221.5 942.6L1221.7 991.2L1222.0 962.3L1222.2 936.8L1222.5 945.8L1222.7 985.2L1223.0 956.9L1223.2 993.0L1223.5 975.3L1223.7 973.5L1224.0 958.4L1224.2 971.2L1224.5 955.0L1224.7 979.3L1225.0 967.3L1225.2 953.2L1225.4 952.0L1225.7 959.5L1225.9 952.7L1226.2 960.7L1226.4 1001.1L1226.7 956.0L1226.9 955.3L1227.2 952.1L1227.4 982.7L1227.6 940.1L1227.9 993.6L1228.1 946.1L1228.4 982.0L1228.6 963.5L1228.8 986.2L1229.1 953.3L1229.3 966.8L1229.6 984.2L1229.8 959.4L1230.1 946.8L1230.3 960.8L1230.5 989.3L1230.8 956.3L1231.0 1000.3L1231.5 953.5L1231.7 1001.1L1232.0 966.2L1232.2 943.2L1232.4 947.6L1232.7 985.3L1232.9 957.4L1233.2 949.2L1233.4 969.8L1233.6 948.2L1233.9 981.4L1234.1 941.8L1234.3 943.5L1234.6 1001.1L1234.8 949.8L1235.1 991.1L1235.3 957.0L1235.5 967.9L1235.8 1001.1L1236.0 976.3L1236.2 951.8L1236.5 958.8L1236.7 982.4L1236.9 993.7L1237.2 981.3L1237.4 968.8L1237.6 957.2L1237.9 982.2L1238.1 966.1L1238.3 936.2L1238.6 960.3L1238.8 938.6L1239.0 993.9L1239.3 997.7L1239.5 960.8L1239.7 951.9L1240.0 974.6L1240.2 962.8L1240.4 968.1L1240.7 996.3L1240.9 954.6L1241.1 983.0L1241.4 984.9L1241.6 957.4L1241.8 972.9L1242.0 940.2L1242.3 964.4L1242.5 973.5L1242.7 951.3L1243.0 979.7L1243.2 948.7L1243.4 1001.1L1243.6 971.9L1243.9 966.0L1244.1 1001.1L1244.3 961.3L1244.6 977.4L1244.8 950.4L1245.0 956.4L1245.2 946.5L1245.5 972.3L1245.7 990.6L1245.9 962.3L1246.1 983.6L1246.4 968.1L1246.6 959.4L1246.8 950.4L1247.1 940.6L1247.3 963.1L1247.5 970.0L1247.7 1001.1L1248.0 949.2L1248.2 951.1L1248.4 988.5L1248.6 978.5L1248.8 998.0L1249.1 947.7L1249.3 939.5L1249.5 962.4L1249.7 962.4L1250.0 974.4L1250.2 966.5L1250.4 951.8L1250.6 1001.1L1250.9 974.3L1251.1 946.3L1251.3 964.7L1251.5 943.7L1251.7 982.9L1252.0 969.9L1252.2 955.8L1252.4 962.5L1252.6 975.1L1252.9 952.7L1253.1 967.2L1253.3 983.7L1253.5 974.4L1254.0 943.6L1254.2 964.3L1254.4 995.3L1254.6 971.0L1254.8 975.1L1255.1 971.2L1255.3 997.5L1255.5 974.2L1255.7 1001.1L1255.9 988.0L1256.1 980.7L1256.4 962.3L1256.6 955.7L1256.8 998.4L1257.0 988.4L1257.4 955.1L1257.7 970.2L1257.9 971.5L1258.1 970.4L1258.3 979.4L1258.5 983.5L1258.7 1001.1L1259.0 929.4L1259.2 952.8L1259.4 970.1L1259.6 997.5L1259.8 1001.1L1260.0 983.0L1260.3 961.0L1260.5 976.9L1260.7 1001.1L1260.9 996.9L1261.1 980.6L1261.3 974.3L1261.5 957.2L1262.0 968.7L1262.2 945.0L1262.4 989.3L1262.6 963.1L1262.8 963.8L1263.0 998.4L1263.2 953.8L1263.5 961.5L1263.7 962.3L1263.9 937.5L1264.1 973.7L1264.3 931.7L1264.5 976.2L1264.9 988.4L1265.1 955.1L1265.4 962.4L1265.6 950.1L1266.0 1001.1L1266.2 1001.1L1266.4 990.7L1266.6 979.9L1266.8 1001.1L1267.0 978.5L1267.2 1001.1L1267.5 960.8L1267.7 964.2L1267.9 983.7L1268.1 953.3L1268.3 977.0L1268.5 964.2L1268.7 999.0L1268.9 996.2L1269.1 985.9L1269.3 994.2L1269.5 970.2L1269.7 1001.1L1270.0 983.3L1270.2 943.3L1270.4 999.2L1270.6 942.6L1270.8 987.7L1271.0 964.1L1271.2 983.6L1271.4 994.4L1271.6 965.5L1271.8 983.6L1272.0 950.3L1272.2 969.3L1272.4 952.7L1272.6 973.2L1272.8 1001.1L1273.0 1001.1L1273.2 947.9L1273.4 949.7L1273.7 1001.1L1273.9 955.4L1274.1 981.0L1274.3 944.1L1274.5 960.0L1274.7 993.7L1274.9 970.5L1275.1 975.7L1275.3 985.9L1275.5 956.0L1275.7 994.7L1275.9 953.4L1276.1 977.8L1276.3 994.6L1276.5 978.8L1276.7 1001.1L1276.9 982.1L1277.1 969.7L1277.3 1001.1L1277.5 971.8L1277.9 980.8L1278.1 968.6L1278.3 944.9L1278.5 970.8L1278.7 980.0L1278.9 949.6L1279.1 958.8L1279.3 953.0L1279.5 944.8L1279.7 1001.1L1279.9 949.3L1280.1 957.5L1280.3 948.4L1280.5 945.7L1280.7 998.9L1280.9 969.6L1281.1 979.4L1281.5 951.4L1281.7 989.4L1281.9 951.3L1282.1 988.2L1282.3 972.6L1282.5 990.1L1282.7 969.2L1282.9 977.9L1283.1 971.7L1283.3 966.6L1283.5 985.7L1283.7 988.5L1283.9 969.5L1284.1 979.2L1284.3 970.5L1284.5 1001.1L1284.7 981.7L1284.8 851.0L1285.0 962.2L1285.2 960.2L1285.4 978.3L1285.6 945.8L1285.8 969.9L1286.0 966.0L1286.2 938.4L1286.4 968.0L1286.6 968.8L1286.8 958.6L1287.0 970.7L1287.2 973.2L1287.4 965.5L1287.6 1001.1L1288.0 960.1L1288.2 951.3L1288.3 962.2L1288.5 981.4L1288.7 968.8L1288.9 984.4L1289.1 967.1L1289.3 963.1L1289.5 989.0L1289.7 1001.1L1289.9 962.9L1290.1 1001.1L1290.3 972.9L1290.5 1001.1L1290.7 963.6L1290.8 1001.1L1291.0 973.5L1291.2 954.3L1291.4 998.0L1291.6 949.5L1291.8 971.2L1292.0 958.5L1292.2 943.4L1292.4 980.6L1292.6 956.1L1292.8 961.0L1292.9 953.2L1293.1 961.8L1293.3 1001.1L1293.5 959.1L1293.7 983.9L1293.9 973.6L1294.1 981.1L1294.5 949.0L1294.7 981.1L1294.8 972.8L1295.0 959.0L1295.4 994.0L1295.6 936.2L1295.8 975.4L1296.0 974.1L1296.2 971.4L1296.3 969.0L1296.5 976.8L1296.7 953.8L1296.9 1000.5L1297.1 964.2L1297.3 987.6L1297.5 942.8L1297.7 970.8L1297.8 970.5L1298.0 952.9L1298.2 987.6L1298.4 975.2L1298.6 975.0L1298.8 978.2L1299.0 974.4L1299.1 953.6L1299.3 948.9L1299.5 967.3L1299.9 964.8L1300.1 965.2L1300.3 1001.1L1300.4 955.4L1300.6 958.9L1300.8 974.1L1301.0 950.6L1301.2 993.2L1301.4 970.0L1301.5 961.3L1301.9 1000.5L1302.1 959.9L1302.5 1001.1L1302.6 995.7L1302.8 976.8L1303.0 950.0L1303.2 972.8L1303.4 969.4L1303.6 974.1L1303.9 997.5L1304.1 977.2L1304.3 953.6L1304.5 957.2L1304.7 959.1L1304.8 953.3L1305.0 1001.1L1305.4 968.9L1305.6 969.6L1305.7 975.9L1305.9 963.0L1306.1 972.1L1306.3 951.0L1306.5 1001.1L1306.6 958.6L1306.8 971.0L1307.0 973.8L1307.2 966.3L1307.4 986.2L1307.5 971.0L1307.7 974.2L1307.9 954.8L1308.1 939.9L1308.4 994.1L1308.6 989.8L1309.0 942.6L1309.2 972.7L1309.3 975.2L1309.5 957.6L1309.9 981.9L1310.0 957.9L1310.2 1001.1L1310.4 969.1L1310.6 975.2L1310.8 953.8L1310.9 964.3L1311.1 966.1L1311.5 987.9L1311.6 977.1L1311.8 1001.1L1312.0 993.7L1312.2 955.7L1312.4 1001.1L1312.5 957.7L1312.7 998.0L1312.9 970.6L1313.1 945.3L1313.4 969.6L1313.6 1001.1L1313.8 956.3L1313.9 980.1L1314.1 980.8L1314.5 1001.1L1314.6 1001.1L1315.0 956.8L1315.2 960.4L1315.3 942.4L1315.5 958.1L1315.7 932.9L1315.9 952.1L1316.0 980.5L1316.4 967.1L1316.6 977.3L1316.9 967.9L1317.1 971.7L1317.3 963.9L1317.4 977.9L1317.6 990.3L1317.8 972.3L1317.9 979.1L1318.1 978.1L1318.3 970.5L1318.5 975.2L1318.6 946.7L1318.8 1001.1L1319.0 1001.1L1319.2 959.2L1319.3 975.8L1319.5 966.8L1319.7 972.0L1319.8 1000.8L1320.0 954.1L1320.4 980.9L1320.5 989.7L1320.7 960.5L1320.9 964.9L1321.0 1000.8L1321.2 953.6L1321.4 986.7L1321.6 1001.1L1321.9 960.6L1322.1 975.7L1322.4 951.6L1322.6 966.0L1322.7 999.9L1322.9 941.0L1323.1 961.7L1323.3 1001.1L1323.4 993.0L1323.6 952.4L1323.9 997.9L1324.1 965.1L1324.3 953.3L1324.4 954.7L1324.6 993.5L1324.9 970.5L1325.1 970.0L1325.4 995.4L1325.6 981.2L1326.0 959.2L1326.1 966.5L1326.3 1000.2L1326.5 965.5L1326.6 944.4L1327.0 990.1L1327.1 951.6L1327.3 1001.1L1327.5 997.3L1327.6 987.5L1327.8 992.9L1328.0 992.5L1328.1 973.1L1328.5 959.0L1328.6 982.5L1328.8 1001.1L1329.0 996.8L1329.1 954.1L1329.3 950.8L1329.5 974.5L1329.6 946.1L1330.0 998.8L1330.1 987.1L1330.3 971.0L1330.4 1001.1L1330.6 963.0L1330.9 991.3L1331.1 978.1L1331.3 1000.4L1331.4 979.3L1331.6 953.5L1331.8 936.8L1331.9 991.4L1332.1 942.7L1332.3 956.1L1332.4 949.2L1332.6 988.5L1332.7 946.4L1332.9 988.6L1333.1 974.4L1333.2 973.5L1333.4 973.6L1333.6 975.8L1333.7 956.0L1333.9 964.4L1334.1 1001.1L1334.4 988.1L1334.5 952.0L1334.9 978.5L1335.0 987.5L1335.2 1001.1L1335.4 960.5L1335.5 947.1L1335.7 988.5L1336.0 961.1L1336.2 1001.1L1336.5 977.8L1336.6 1001.1L1336.8 976.9L1337.0 1001.1L1337.1 966.3L1337.3 971.2L1337.4 961.8L1337.6 984.4L1337.8 961.7L1337.9 995.2L1338.1 979.6L1338.4 954.6L1338.6 1001.1L1338.7 989.6L1338.9 1001.1L1339.1 959.4L1339.2 997.8L1339.4 967.2L1339.5 970.9L1339.7 961.5L1339.8 975.7L1340.0 1001.1L1340.5 945.7L1340.6 990.1L1340.8 957.5L1341.0 1001.1L1341.1 939.7L1341.4 990.0L1341.6 1001.1L1341.8 960.8L1341.9 970.4L1342.1 979.1L1342.2 959.1L1342.4 1000.1L1342.5 982.5L1342.9 954.2L1343.0 994.5L1343.5 962.4L1343.6 980.1L1344.0 968.8L1344.1 982.8L1344.3 959.5L1344.4 994.0L1344.6 978.1L1344.7 963.4L1344.9 964.3L1345.1 970.8L1345.2 964.3L1345.4 994.1L1345.5 976.0L1345.7 960.5L1345.8 1001.1L1346.0 1001.1L1346.1 965.5L1346.3 966.9L1346.5 966.4L1346.6 958.3L1346.8 996.8L1346.9 954.2L1347.1 982.5L1347.2 969.8L1347.4 972.8L1347.5 959.2L1347.7 973.6L1347.9 959.2L1348.0 977.4L1348.3 965.8L1348.5 995.8L1348.6 952.9L1348.9 987.3L1349.1 963.0L1349.4 990.5L1349.5 993.2L1349.7 947.9L1349.9 1001.1L1350.0 1001.1L1350.2 977.8L1350.5 1001.1L1350.6 979.4L1350.8 1001.1L1350.9 979.7L1351.1 969.6L1351.2 990.4L1351.4 976.9L1351.5 958.6L1352.0 997.3L1352.1 948.6L1352.3 985.5L1352.4 977.4L1352.6 948.8L1352.9 994.3L1353.1 971.5L1353.2 1001.1L1353.4 965.3L1353.5 1000.7L1353.7 976.4L1353.8 1001.1L1354.0 986.4L1354.1 945.9L1354.3 999.1L1354.4 971.2L1354.6 1001.1L1354.9 973.4L1355.0 984.0L1355.5 976.5L1355.6 1001.1L1355.9 954.9L1356.1 957.1L1356.4 950.2L1356.5 971.0L1356.7 958.0L1356.8 990.4L1357.0 981.5L1357.1 1001.1L1357.4 957.0L1357.6 995.2L1357.7 962.6L1357.9 967.3L1358.0 1001.1L1358.2 940.8L1358.5 971.1L1358.6 961.8L1358.8 959.0L1358.9 959.4L1359.1 951.9L1359.5 998.3L1359.6 954.9L1359.8 950.4L1359.9 959.2L1360.1 969.3L1360.2 1001.1L1360.4 998.8L1360.5 999.1L1360.8 970.6L1361.0 1001.1L1361.1 994.0L1361.4 951.9L1361.6 1001.1L1361.9 966.4L1362.0 958.3L1362.4 994.7L1362.6 983.7L1362.7 953.3L1362.9 955.5L1363.0 1001.1L1363.2 980.9L1363.5 991.6L1363.6 978.9L1363.8 1001.1L1363.9 982.2L1364.0 960.6L1364.2 951.4L1364.3 1001.1L1364.5 952.9L1364.6 982.3L1364.9 961.7L1365.1 956.4L1365.2 1001.1L1365.5 1001.1L1365.6 977.6L1365.9 958.6L1366.1 957.1L1366.2 982.8L1366.4 967.0L1366.5 1001.1L1366.9 950.3L1367.1 1001.1L1367.4 980.5L1367.5 1001.1L1367.9 971.1L1368.1 973.5L1368.2 967.0L1368.4 967.9L1368.5 965.1L1368.9 1001.1L1369.1 987.6L1369.2 1001.1L1369.4 987.6L1369.5 969.2L1369.8 949.6L1369.9 976.0L1370.1 971.2L1370.2 997.1L1370.4 940.0L1370.5 1000.1L1370.9 967.7L1371.1 997.4L1371.2 966.0L1371.4 983.1L1371.5 967.3L1371.6 1001.1L1371.9 972.7L1372.1 947.6L1372.5 985.9L1372.6 953.8L1372.9 965.3L1373.1 1001.1L1373.2 971.3L1373.5 987.3L1373.6 985.3L1373.8 966.8L1373.9 978.9L1374.0 944.7L1374.3 1001.1L1374.5 966.5L1374.6 964.9L1374.7 977.3L1374.9 962.0L1375.0 955.0L1375.2 970.7L1375.3 952.6L1375.4 964.4L1375.6 965.6L1375.9 951.5L1376.0 958.9L1376.1 999.2L1376.4 947.7L1376.5 1001.1L1376.7 946.1L1377.0 969.7L1377.1 950.6L1377.4 982.3L1377.5 997.0L1377.9 969.0L1378.1 967.0L1378.3 957.2L1378.5 979.3L1378.6 975.7L1378.9 945.8L1379.0 1001.1L1379.4 967.4L1379.6 966.2L1379.9 960.1L1380.0 972.6L1380.1 988.1L1380.3 950.6L1380.4 1000.8L1380.5 972.9L1380.8 994.1L1381.0 945.0L1381.1 973.3L1381.2 946.8L1381.4 991.2L1381.5 974.3L1381.8 945.4L1381.9 981.4L1382.0 968.8L1382.2 955.8L1382.5 994.1L1382.6 974.4L1382.7 1001.1L1383.0 971.4L1383.1 944.5L1383.4 1001.1L1383.5 983.0L1383.7 990.8L1383.9 961.0L1384.1 983.0L1384.2 1001.1L1384.3 964.5L1384.5 998.6L1384.6 954.5L1384.8 967.5L1384.9 955.2L1385.0 965.8L1385.2 1001.1L1385.4 957.8L1385.6 993.0L1385.7 957.3L1386.0 999.8L1386.1 973.0L1386.2 967.0L1386.4 986.6L1386.5 972.7L1386.6 998.5L1386.8 1000.9L1386.9 954.3L1387.0 981.4L1387.4 950.0L1387.6 993.9L1387.7 997.6L1388.0 970.2L1388.1 955.8L1388.2 953.9L1388.4 976.0L1388.5 975.1L1388.6 970.2L1388.8 969.5L1388.9 1001.1L1389.0 963.8L1389.3 1001.1L1389.4 962.1L1389.6 967.1L1389.7 1001.1L1389.9 961.8L1390.1 981.4L1390.2 958.5L1390.5 995.6L1390.6 993.2L1390.7 953.8L1390.9 958.0L1391.0 985.9L1391.1 993.9L1391.4 945.3L1391.5 1001.1L1391.8 964.0L1391.9 997.7L1392.1 986.7L1392.3 959.5L1392.4 973.9L1392.6 973.9L1392.7 977.3L1393.0 881.0L1393.1 986.5L1393.5 957.0L1393.6 954.9L1393.8 992.6L1393.9 951.0L1394.0 953.3L1394.1 1001.1L1394.4 982.4L1394.5 1001.1L1394.8 967.9L1394.9 990.5L1395.0 948.3L1395.2 975.0L1395.4 969.0L1395.6 1001.1L1396.0 957.7L1396.1 969.3L1396.5 1001.1L1396.6 988.0L1396.9 947.2L1397.0 975.7L1397.1 987.7L1397.4 961.9L1397.5 979.5L1397.6 979.5L1397.8 993.6L1397.9 971.7L1398.0 964.5L1398.4 1001.1L1398.5 999.8L1398.7 1001.1L1398.8 968.3L1398.9 982.5L1399.0 1001.1L1399.2 952.4L1399.4 982.5L1399.5 969.6L1399.9 1001.1L1400.1 1001.1L1400.4 975.8L1400.6 996.6L1400.7 1001.1L1400.8 950.5L1400.9 1001.1L1401.1 976.0L1401.2 956.5L1401.3 986.2L1401.4 982.5L1401.6 1001.1L1402.0 951.3L1402.1 946.5L1402.5 985.1L1402.6 963.3L1402.7 956.0L1403.0 996.1L1403.1 959.9L1403.2 952.5L1403.3 988.7L1403.5 975.6L1403.6 995.9L1403.7 946.9L1404.0 955.9L1404.1 974.8L1404.2 982.9L1404.3 961.3L1404.5 962.6L1404.6 992.4L1405.0 965.1L1405.1 967.8L1405.2 987.2L1405.5 981.3L1405.6 982.0L1405.7 952.3L1406.0 989.2L1406.1 959.6L1406.2 956.3L1406.5 1001.1L1406.6 962.9L1406.7 959.7L1407.0 997.9L1407.1 990.2L1407.3 969.0L1407.4 984.7L1407.6 973.5L1407.7 945.6L1407.9 1001.1L1408.1 992.6L1408.3 950.0L1408.4 951.3L1408.6 966.3L1408.7 987.9L1408.9 975.7L1409.0 977.0L1409.4 958.8L1409.5 950.6L1409.8 1000.1L1409.9 966.8L1410.0 978.8L1410.2 963.5L1410.3 998.0L1410.4 977.1L1410.5 979.6L1410.6 988.4L1410.8 965.0L1410.9 981.4L1411.0 953.2L1411.1 946.6L1411.4 1000.3L1411.5 990.5L1411.6 1001.1L1411.7 954.0L1412.0 1001.1L1412.1 990.3L1412.3 939.9L1412.5 956.4L1412.6 957.4L1412.7 956.4L1412.8 982.6L1413.0 979.0L1413.1 956.8L1413.4 967.4L1413.6 1001.1L1413.8 970.1L1413.9 983.9L1414.0 960.3L1414.2 999.6L1414.4 969.7L1414.5 997.6L1414.6 1001.1L1414.8 966.9L1414.9 969.2L1415.0 993.9L1415.2 959.7L1415.4 997.9L1415.5 976.9L1415.6 977.8L1415.7 972.8L1415.8 996.9L1416.0 976.5L1416.1 961.0L1416.3 1001.1L1416.4 988.9L1416.6 986.1L1416.7 1001.1L1416.9 977.7L1417.0 984.7L1417.2 971.5L1417.4 1001.1L1417.5 986.7L1417.6 963.5L1418.0 1001.1L1418.1 999.7L1418.2 1001.1L1418.5 962.4L1418.6 958.8L1418.8 992.4L1418.9 988.1L1419.1 956.3L1419.4 972.5L1419.5 995.8L1419.6 998.9L1419.9 976.1L1420.0 1001.1L1420.4 952.7L1420.5 970.5L1420.6 957.4L1420.8 980.5L1420.9 978.9L1421.1 971.0L1421.2 991.9L1421.4 964.9L1421.5 991.7L1421.8 969.3L1421.9 974.3L1422.0 967.7L1422.4 1001.1L1422.5 957.5L1422.6 999.5L1422.8 969.4L1422.9 993.2L1423.1 993.2L1423.3 959.0L1423.4 1001.1L1423.5 959.2L1424.0 1001.1L1424.1 1001.1L1424.2 953.9L1424.4 956.0L1424.6 954.6L1424.8 999.0L1424.9 959.2L1425.0 1001.1L1425.3 953.8L1425.5 978.0L1425.6 951.3L1425.7 980.6L1426.0 977.3L1426.1 950.6L1426.4 991.0L1426.5 1001.1L1426.6 963.1L1427.0 990.0L1427.1 982.9L1427.2 1001.1L1427.3 956.4L1427.4 980.5L1427.6 972.8L1427.7 994.9L1427.8 948.3L1427.9 959.3L1428.0 965.2L1428.5 1001.1L1428.6 960.2L1428.7 947.9L1428.9 980.2L1429.0 950.2L1429.3 1001.1L1429.4 951.8L1429.5 1001.1L1429.6 950.8L1430.0 985.3L1430.1 963.5L1430.2 987.8L1430.3 946.7L1430.4 982.8L1430.5 984.7L1430.6 955.9L1430.8 989.9L1431.0 959.8L1431.1 962.3L1431.2 956.1L1431.3 1001.1L1431.4 993.2L1431.5 960.7L1431.9 997.4L1432.0 953.2L1432.1 958.3L1432.3 1001.1L1432.4 960.2L1432.6 974.8L1432.8 990.6L1432.9 959.6L1433.0 1001.1L1433.5 947.0L1433.6 953.1L1433.9 1001.1L1434.0 951.8L1434.5 1001.1L1434.6 1001.1L1434.8 960.8L1434.9 965.2L1435.0 962.8L1435.1 955.5L1435.4 972.9L1435.5 970.1L1435.6 973.8L1435.8 1001.1L1435.9 987.2L1436.0 958.7L1436.2 980.0L1436.5 980.0L1436.6 984.7L1436.7 1001.1L1436.9 931.8L1437.0 996.6L1437.2 959.4L1437.5 960.9L1437.6 987.2L1437.7 957.9L1437.9 1001.1L1438.0 995.3L1438.3 997.8L1438.5 954.5L1438.6 965.2L1438.8 979.7L1438.9 951.9L1439.0 1001.1L1439.4 966.4L1439.6 966.5L1439.8 989.6L1440.0 945.1L1440.1 985.0L1440.3 969.7L1440.4 983.2L1440.5 965.0L1440.8 973.5L1441.0 972.4L1441.1 954.4L1441.4 978.3L1441.5 993.0L1441.6 1001.1L1442.0 970.1L1442.1 970.8L1442.2 959.8L1442.3 1001.1L1442.5 974.3L1442.6 1001.1L1442.7 956.9L1442.9 992.2L1443.0 953.5L1443.4 1000.9L1443.5 983.2L1443.6 957.6L1443.9 976.5L1444.0 987.0L1444.2 944.8L1444.4 972.5L1444.5 950.0L1444.9 1001.1L1445.0 980.3L1445.1 994.1L1445.3 950.7L1445.4 1001.1L1445.5 987.8L1445.7 992.2L1445.9 947.6L1446.1 1001.1L1446.3 954.8L1446.5 971.7L1446.6 988.8L1446.8 960.7L1446.9 1001.1L1447.0 986.9L1447.2 959.3L1447.4 975.3L1447.5 948.2L1447.7 1001.1L1447.8 938.1L1448.0 987.8L1448.1 963.6L1448.3 961.6L1448.5 1001.1L1448.6 1001.1L1448.8 971.8L1448.9 989.7L1449.0 983.5L1449.1 944.7L1449.5 1001.1L1449.6 978.0L1449.7 1001.1L1449.9 941.4L1450.0 989.7L1450.1 984.5L1450.2 998.5L1450.3 962.5L1450.4 995.6L1450.5 965.8L1450.6 956.7L1450.7 1001.1L1450.9 984.9L1451.0 1001.1L1451.5 961.6L1451.6 1001.1L1452.0 974.7L1452.1 954.9L1452.3 991.6L1452.5 953.8L1452.6 988.3L1452.9 942.3L1453.0 967.2L1453.1 982.8L1453.4 952.3L1453.5 985.3L1453.6 966.3L1453.9 992.4L1454.0 990.8L1454.1 966.9L1454.2 999.5L1454.5 978.1L1454.6 1001.1L1455.0 966.6L1455.1 965.7L1455.4 1001.1L1455.5 1001.1L1455.9 962.2L1456.0 989.8L1456.1 1001.1L1456.3 964.8L1456.4 978.7L1456.5 962.4L1456.6 1001.1L1456.9 970.0L1457.1 959.0L1457.4 996.3L1457.5 952.2L1457.6 1001.1L1457.9 959.6L1458.0 981.4L1458.1 969.1L1458.4 1001.1L1458.5 961.3L1458.6 987.1L1458.9 1001.1L1459.0 961.6L1459.1 968.4L1459.2 961.0L1459.3 970.0L1459.4 963.9L1459.5 1001.1L1459.9 970.3L1460.0 946.9L1460.1 987.9L1460.4 978.8L1460.5 1001.1L1460.7 969.5L1460.9 1000.9L1461.0 958.9L1461.1 1001.1L1461.4 956.5L1461.5 962.7L1461.8 984.6L1461.9 951.7L1462.0 957.4L1462.2 978.9L1462.4 966.0L1462.5 965.1L1462.6 963.7L1462.7 1001.1L1462.9 1001.1L1463.0 980.2L1463.2 958.2L1463.4 976.1L1463.5 986.8L1463.6 995.4L1463.9 947.2L1464.0 974.1L1464.1 965.5L1464.3 982.5L1464.4 973.8L1464.5 975.8L1464.7 953.6L1464.8 1000.6L1464.9 983.1L1465.0 977.2L1465.1 956.8L1465.3 988.8L1465.4 987.1L1465.5 988.7L1465.6 1001.1L1465.7 957.4L1465.9 992.6L1466.0 970.2L1466.3 1001.1L1466.4 964.2L1466.5 956.8L1466.9 1001.1L1467.0 982.6L1467.1 942.7L1467.3 987.0L1467.4 955.3L1467.5 1001.1L1467.8 941.0L1467.9 961.3L1468.0 982.7L1468.1 1001.1L1468.3 969.8L1468.4 986.3L1468.5 983.5L1468.6 1001.1L1468.7 957.6L1469.0 1001.1L1469.1 993.4L1469.3 1001.1L1469.4 949.3L1469.5 985.8L1469.6 996.6L1469.7 864.0L1469.9 1001.1L1470.0 1001.1L1470.1 972.1L1470.2 952.0L1470.5 961.3L1470.6 971.9L1470.7 1001.1L1471.0 961.3L1471.0 1000.6L1471.2 1001.1L1471.3 963.4L1471.4 973.2L1471.5 961.5L1471.6 957.0L1471.9 994.3L1472.0 940.4L1472.4 1001.1L1472.5 974.0L1472.6 1001.1L1473.0 981.1L1473.1 962.2L1473.2 990.1L1473.5 972.5L1473.6 1001.1L1473.7 955.0L1474.0 955.1L1474.0 998.3L1474.1 962.7L1474.4 967.5L1474.5 975.5L1474.6 953.4L1474.7 986.2L1474.9 978.5L1475.0 980.8L1475.4 1001.1L1475.5 953.3L1475.6 955.9L1475.7 979.0L1475.9 949.6L1476.0 977.8L1476.1 1001.1L1476.3 970.6L1476.4 973.5L1476.5 995.7L1476.8 951.9L1476.9 1001.1L1477.0 976.0L1477.4 988.6L1477.5 961.4L1477.6 975.7L1477.7 997.1L1477.8 957.6L1478.0 971.6L1478.1 991.6L1478.2 993.8L1478.3 950.6L1478.4 966.7L1478.5 970.6L1478.7 1001.1L1478.9 956.1L1479.0 972.6L1479.4 1001.1L1479.5 943.8L1479.6 950.5L1479.7 1000.4L1480.0 967.2L1480.0 960.8L1480.3 1001.1L1480.4 943.5L1480.5 983.2L1480.6 1001.1L1480.9 976.3L1481.0 997.2L1481.1 971.5L1481.3 950.6L1481.4 986.7L1481.5 966.6L1481.6 1000.5L1481.6 1001.1L1481.8 984.5L1481.9 990.1L1482.0 959.8L1482.1 954.2L1482.2 1001.1L1482.5 993.4L1482.6 976.3L1482.9 962.9L1483.0 973.2L1483.0 952.0L1483.2 951.2L1483.3 1001.1L1483.4 978.9L1483.5 969.5L1483.7 957.7L1483.9 991.2L1484.0 987.8L1484.1 1001.1L1484.3 953.2L1484.4 1001.1L1484.5 978.8L1484.6 1001.1L1485.0 957.4L1485.1 975.8L1485.2 962.9L1485.4 993.1L1485.5 967.9L1485.5 1001.1L1485.8 971.5L1485.9 978.7L1486.0 977.6L1486.1 1001.1L1486.2 952.3L1486.5 978.0L1486.6 958.8L1486.7 977.9L1486.9 973.9L1487.0 991.2L1487.1 957.6L1487.3 1001.1L1487.5 963.0L1487.6 967.6L1487.8 966.1L1487.8 990.6L1487.9 971.2L1488.0 1001.1L1488.4 966.0L1488.5 989.4L1488.6 977.2L1488.8 951.8L1488.9 961.3L1489.0 1001.1L1489.1 954.0L1489.5 997.6L1489.6 981.3L1489.8 974.9L1489.9 997.9L1490.0 968.2L1490.3 988.5L1490.5 951.7L1490.6 958.9L1490.8 1001.1L1490.9 969.8L1491.0 988.9L1491.2 1001.1L1491.4 956.4L1491.5 967.4L1491.6 963.4L1491.7 1001.1L1491.9 975.0L1492.0 1001.1L1492.4 945.3L1492.5 952.7L1492.6 967.9L1492.8 951.8L1492.9 987.0L1493.0 972.1L1493.1 949.2L1493.2 1001.1L1493.5 961.8L1493.5 991.3L1493.6 953.4L1494.0 965.3L1494.1 976.9L1494.3 1001.1L1494.3 953.4L1494.4 991.4L1494.5 1001.1L1494.9 959.8L1495.0 982.4L1495.1 995.9L1495.3 956.5L1495.4 1001.1L1495.5 976.4L1495.7 1001.1L1495.8 953.1L1495.9 959.7L1496.0 979.5L1496.1 1001.1L1496.3 958.6L1496.5 1001.1L1496.6 955.4L1496.7 998.9L1496.9 965.1L1497.0 1001.1L1497.3 943.6L1497.5 965.1L1497.5 989.4L1497.9 947.4L1498.0 971.3L1498.1 970.6L1498.2 1001.1L1498.3 957.0L1498.4 982.8L1498.5 1001.1L1498.6 965.2L1498.9 991.3L1499.0 1001.1L1499.3 957.0L1499.5 978.3L1499.6 987.1L1499.7 1001.1L1499.9 968.6L1500.0 1001.1L1500.1 960.9L1500.3 1001.1L1500.4 979.4L1500.5 979.7L1500.9 955.8L1501.0 997.3L1501.0 999.6L1501.1 1001.1L1501.4 941.3L1501.5 984.2L1501.6 967.4L1501.7 1001.0L1501.9 996.4L1502.0 970.0L1502.3 958.2L1502.3 987.1L1502.4 975.6L1502.5 978.7L1502.6 951.3L1502.8 1001.1L1503.0 978.8L1503.0 958.5L1503.1 992.4L1503.5 954.2L1503.6 972.3L1503.6 1001.1L1503.9 957.2L1504.0 1001.1L1504.1 1001.1L1504.3 962.7L1504.4 1001.1L1504.5 963.7L1504.9 1001.1L1505.0 983.7L1505.2 1001.1L1505.3 972.5L1505.4 1001.1L1505.5 946.1L1505.6 1001.1L1506.0 978.3L1506.0 981.4L1506.1 961.6L1506.2 989.4L1506.5 973.7L1506.6 952.7L1507.0 991.8L1507.1 1001.1L1507.5 960.5L1507.6 969.8L1507.7 1001.1L1507.8 959.1L1507.9 969.1L1508.0 988.9L1508.1 982.1L1508.2 1001.1L1508.4 984.4L1508.5 961.9L1508.6 952.2L1508.7 998.2L1508.9 971.8L1509.0 964.4L1509.1 946.5L1509.4 1001.1L1509.5 962.8L1509.7 1001.1L1509.9 1001.1L1510.0 974.6L1510.2 1001.1L1510.4 943.6L1510.5 966.8L1510.5 969.9L1510.7 1001.1L1511.0 958.9L1511.0 1001.1L1511.3 948.4L1511.5 985.0L1511.5 1001.1L1511.8 975.5L1512.0 1001.1L1512.0 983.3L1512.2 993.1L1512.5 953.2L1512.5 965.1L1512.8 954.3L1512.9 994.2L1513.0 964.1L1513.0 958.7L1513.3 992.3L1513.5 956.2L1513.5 1001.1L1513.9 965.4L1514.0 965.9L1514.0 950.0L1514.3 1001.1L1514.5 989.6L1514.5 961.1L1514.6 997.6L1514.9 951.4L1514.9 966.1L1515.0 967.7L1515.2 998.0L1515.4 955.2L1515.5 1001.1L1515.7 950.9L1515.9 1001.1L1516.0 979.9L1516.2 993.6L1516.4 966.3L1516.5 959.6L1516.6 988.9L1516.8 955.8L1516.9 972.5L1517.0 980.9L1517.1 967.2L1517.2 1001.1L1517.5 968.7L1517.6 973.0L1517.7 973.8L1517.8 952.9L1518.0 955.6L1518.1 991.5L1518.2 994.4L1518.2 958.3L1518.5 988.3L1518.6 998.8L1518.9 942.4L1519.0 979.7L1519.0 989.8L1519.1 966.1L1519.4 1001.1L1519.5 979.5L1519.5 989.2L1519.7 970.6L1519.9 996.5L1519.9 977.9L1520.0 978.3L1520.3 968.1L1520.3 1001.1L1520.4 993.4L1520.5 968.1L1520.6 963.3L1520.9 1000.1L1521.0 975.3L1521.1 972.0L1521.2 1001.1L1521.5 964.0L1521.6 984.7L1521.6 1001.1L1521.7 972.1L1522.0 1001.1L1522.0 1001.1L1522.3 965.4L1522.4 995.4L1522.5 987.3L1522.6 958.7L1522.7 1001.1L1522.9 1001.1L1523.0 966.2L1523.1 1001.1L1523.2 963.6L1523.5 981.6L1523.6 1001.1L1524.0 965.4L1524.0 970.9L1524.2 955.6L1524.4 1001.1L1524.4 977.4L1524.5 999.8L1524.7 958.2L1524.9 1001.1L1525.0 962.0L1525.2 961.2L1525.4 1001.1L1525.5 997.0L1525.6 953.7L1525.6 999.7L1526.0 964.8L1526.0 986.7L1526.2 1001.1L1526.4 958.0L1526.5 972.9L1526.6 959.1L1526.8 1000.4L1527.0 963.6L1527.1 956.1L1527.1 945.5L1527.3 1001.1L1527.5 986.0L1527.5 1001.1L1527.9 960.8L1528.0 945.6L1528.2 1001.1L1528.5 977.5L1528.6 960.5L1528.7 1001.1L1528.8 955.1L1528.9 1001.1L1529.0 990.9L1529.2 870.0L1529.4 1001.1L1529.5 1001.1L1529.6 981.0L1529.7 970.5L1529.8 987.1L1530.0 973.7L1530.0 968.9L1530.1 959.8L1530.4 1001.1L1530.5 968.3L1530.7 1001.1L1531.0 937.4L1531.1 956.7L1531.3 1001.1L1531.4 1000.8L1531.5 984.7L1531.6 1001.1L1531.9 967.2L1532.0 982.0L1532.1 986.6L1532.2 949.1L1532.5 951.9L1532.5 965.4L1532.9 1001.1L1533.0 1001.1L1533.1 998.9L1533.1 1001.1L1533.5 945.8L1533.5 975.5L1533.6 956.1L1534.0 974.4L1534.1 981.1L1534.2 962.5L1534.4 1001.1L1534.5 991.9L1534.5 993.6L1534.8 958.7L1535.0 976.3L1535.1 1000.2L1535.4 961.5L1535.5 981.2L1535.5 988.3L1535.7 963.6L1535.9 1001.1L1536.0 976.2L1536.1 989.2L1536.3 1001.1L1536.4 961.5L1536.5 984.4L1536.6 1001.1L1536.7 961.1L1537.0 1001.1L1537.1 981.5L1537.2 984.1L1537.3 949.3L1537.4 977.2L1537.5 983.9L1537.6 968.6L1537.8 1001.1L1538.0 971.2L1538.0 982.1L1538.1 972.0L1538.2 1001.1L1538.5 973.2L1538.6 988.0L1538.8 961.5L1538.9 986.7L1539.0 1001.1L1539.1 968.5L1539.5 969.7L1539.6 1001.1L1539.6 946.7L1539.9 978.2L1540.0 1001.1L1540.5 953.7L1540.5 973.9L1540.7 959.1L1540.8 1001.1L1541.0 991.5L1541.1 1000.7L1541.2 948.2L1541.4 989.9L1541.5 982.3L1541.6 1001.1L1541.7 971.9L1542.0 985.0L1542.0 962.3L1542.3 1001.1L1542.5 974.1L1542.5 973.5L1542.7 953.2L1542.8 1001.1L1543.0 955.4L1543.1 1001.1L1543.4 946.5L1543.5 972.5L1543.6 959.7L1543.9 1001.1L1544.0 1001.1L1544.0 988.6L1544.1 945.1L1544.5 990.0L1544.6 985.8L1544.6 1001.1L1544.9 966.3L1545.0 967.1L1545.1 987.7L1545.4 1001.1L1545.4 961.8L1545.5 948.1L1545.9 998.7L1546.0 980.6L1546.0 1001.1L1546.1 965.5L1546.5 1001.1L1546.5 967.3L1546.6 961.2L1546.8 979.4L1547.0 971.1L1547.1 956.2L1547.3 1001.1L1547.5 996.2L1547.6 983.7L1547.6 958.8L1547.9 1001.1L1548.0 966.8L1548.1 1001.1L1548.2 958.8L1548.4 965.6L1548.5 994.1L1548.6 1001.1L1548.7 963.4L1549.0 969.4L1549.0 988.2L1549.1 997.4L1549.2 962.8L1549.5 987.8L1549.5 979.8L1549.7 984.1L1549.8 961.7L1550.0 981.7L1550.0 961.0L1550.3 1001.1L1550.5 1001.1L1550.5 977.8L1550.6 1001.1L1550.8 966.7L1551.0 998.1L1551.1 974.9L1551.2 962.2L1551.3 1001.1L1551.5 967.8L1551.6 958.2L1551.6 1001.1L1552.0 1001.1L1552.1 1001.1L1552.1 944.5L1552.5 1001.1L1552.6 1001.1L1552.8 949.7L1553.0 1001.1L1553.1 956.5L1553.1 1001.1L1553.5 996.0L1553.6 1001.1L1553.6 961.3L1554.0 969.3L1554.1 952.3L1554.2 1001.1L1554.5 953.5L1554.6 967.9L1554.6 1001.1L1554.8 962.2L1555.0 969.4L1555.1 1001.1L1555.3 959.7L1555.5 1001.1L1555.6 966.0L1555.9 1001.1L1556.0 1001.1L1556.1 987.8L1556.2 954.8L1556.3 1001.1L1556.5 968.7L1556.5 983.1L1556.6 1001.1L1557.0 953.0L1557.0 946.9L1557.3 1001.1L1557.5 953.0L1557.5 995.1L1557.7 964.0L1557.8 1001.1L1558.0 984.7L1558.0 997.4L1558.2 965.6L1558.4 1001.1L1558.5 990.7L1558.5 1001.1L1558.9 947.1L1558.9 1001.1L1559.0 969.6L1559.2 987.0L1559.4 978.5L1559.5 960.8L1559.6 1001.1L1560.0 992.8L1560.1 975.0L1560.1 1001.1L1560.4 953.2L1560.5 980.2L1560.5 1001.1L1560.8 962.6L1561.0 1001.1L1561.0 984.7L1561.2 972.8L1561.5 1001.1L1561.5 998.3L1561.6 964.7L1561.9 1001.1L1561.9 987.4L1562.0 1001.1L1562.5 973.0L1562.6 1001.1L1562.6 959.1L1563.0 1001.1L1563.0 1001.1L1563.3 976.3L1563.5 1001.1L1563.5 969.2L1563.7 1001.1L1563.8 966.5L1563.9 967.4L1564.0 1000.6L1564.1 1001.1L1564.4 951.6L1564.5 979.7L1564.6 982.7L1564.6 1001.1L1564.9 955.5L1565.0 963.8L1565.0 969.0L1565.1 1001.1L1565.3 957.9L1565.4 990.1L1565.5 1001.1L1565.7 956.1L1566.0 984.4L1566.1 965.2L1566.3 1001.1L1566.3 956.3L1566.5 1001.1L1566.5 967.0L1566.6 1001.1L1566.9 971.6L1567.0 973.7L1567.2 963.7L1567.4 1001.1L1567.5 998.4L1567.6 958.3L1567.8 982.3L1568.0 974.8L1568.0 980.8L1568.3 957.6L1568.4 1001.1L1568.4 982.6L1568.5 965.7L1568.6 1001.1L1568.7 963.4L1569.0 1001.1L1569.0 966.5L1569.2 993.1L1569.4 989.2L1569.5 1001.1L1569.9 956.9L1570.0 987.1L1570.1 974.9L1570.2 949.5L1570.3 983.1L1570.5 979.8L1570.5 952.0L1570.7 1001.1L1571.0 999.3L1571.1 955.6L1571.2 994.5L1571.3 951.6L1571.5 965.9L1571.5 948.1L1571.6 1001.1L1572.0 967.7L1572.1 980.9L1572.4 991.6L1572.5 950.1L1572.5 984.1L1572.6 955.7L1572.7 1001.1L1573.0 978.3L1573.1 960.0L1573.3 953.4L1573.5 1001.1L1573.5 970.1L1573.7 1001.1L1573.9 945.0L1574.0 1001.1L1574.1 981.1L1574.3 960.6L1574.5 975.8L1574.5 980.2L1574.6 1001.1L1575.0 958.6L1575.0 975.9L1575.1 989.5L1575.3 959.5L1575.4 964.6L1575.5 979.0L1575.6 1001.1L1575.6 966.2L1576.0 967.9L1576.0 980.6L1576.2 961.3L1576.4 993.5L1576.5 980.6L1576.6 994.1L1576.8 995.1L1576.8 970.7L1577.0 979.2L1577.0 972.9L1577.2 961.7L1577.3 1001.1L1577.5 969.3L1577.5 980.5L1577.8 889.0L1578.0 1001.1L1578.1 987.1L1578.3 959.0L1578.3 1001.1L1578.5 964.5L1578.5 959.5L1578.6 1001.1L1579.0 1001.1L1579.0 961.3L1579.3 1001.1L1579.4 955.0L1579.5 988.0L1579.6 955.4L1579.6 1001.1L1579.9 1001.1L1580.0 1001.1L1580.5 967.0L1580.5 987.1L1580.7 1001.1L1580.7 948.2L1581.0 972.2L1581.0 968.3L1581.2 950.7L1581.3 1001.1L1581.5 1001.1L1581.6 1001.1L1581.8 976.7L1581.9 984.0L1582.0 959.6L1582.3 943.1L1582.3 1001.1L1582.5 1001.1L1582.5 996.6L1582.7 952.0L1582.8 999.9L1583.0 972.4L1583.0 975.6L1583.1 1001.1L1583.2 956.7L1583.5 1001.1L1583.5 997.2L1583.7 958.9L1583.8 1001.1L1584.0 976.6L1584.1 1001.1L1584.4 951.5L1584.4 985.7L1584.5 981.5L1584.6 956.0L1584.8 1001.1L1584.9 983.7L1585.0 999.9L1585.3 959.0L1585.5 998.0L1585.5 985.9L1585.6 997.2L1586.0 970.8L1586.0 960.0L1586.2 950.1L1586.3 1001.1L1586.5 1001.1L1586.5 980.4L1586.6 1001.1L1586.8 958.6L1587.0 962.4L1587.0 995.8L1587.3 996.6L1587.4 946.0L1587.5 980.0L1587.5 971.9L1587.7 959.6L1588.0 1001.1L1588.0 1001.1L1588.4 955.1L1588.5 973.9L1588.5 970.6L1588.7 960.8L1588.8 1001.1L1589.0 990.7L1589.0 1001.1L1589.1 958.1L1589.5 992.9L1589.5 982.5L1589.8 945.1L1589.9 1001.1L1590.0 996.6L1590.0 972.5L1590.2 1001.1L1590.4 953.5L1590.5 975.3L1590.5 951.2L1590.7 1001.1L1591.0 967.0L1591.0 958.6L1591.2 958.3L1591.4 988.1L1591.5 977.9L1591.5 981.2L1591.6 1001.1L1591.9 960.4L1592.0 975.7L1592.0 977.6L1592.2 991.2L1592.4 962.3L1592.5 984.1L1592.5 974.1L1592.8 1001.1L1593.0 998.4L1593.0 1001.1L1593.5 953.8L1593.5 971.8L1593.6 1001.1L1593.8 953.5L1593.9 1001.1L1594.0 979.8L1594.1 948.9L1594.3 1001.1L1594.5 990.3L1594.6 1001.1L1594.6 967.9L1595.0 984.0L1595.0 953.4L1595.3 947.5L1595.4 1001.1L1595.5 976.0L1595.5 977.9L1595.6 944.9L1595.8 1001.1L1596.0 964.8L1596.0 997.9L1596.1 1001.1L1596.3 969.7L1596.5 980.0L1596.5 961.0L1596.6 947.1L1596.7 1001.1L1597.0 1001.1L1597.1 975.5L1597.3 1001.1L1597.5 948.6L1597.5 957.3L1597.6 993.0L1598.0 969.2L1598.0 995.1L1598.1 958.2L1598.5 999.6L1598.5 1001.1L1598.9 956.3L1599.0 986.0L1599.1 976.7L1599.2 946.8L1599.2 1000.6L1599.5 984.9L1599.5 976.4L1599.7 961.3L1600.0 1001.1L1600.0 1001.0L1600.4 941.0L1600.5 976.9L1600.6 949.1L1600.9 997.2L1601.0 940.6L1601.0 1001.1L1601.3 945.9L1601.5 978.1L1601.5 976.7L1601.9 951.9L1602.0 1001.1L1602.1 974.6L1602.3 993.8L1602.3 942.1L1602.5 974.8L1602.5 990.1L1602.6 948.9L1602.6 1001.1L1602.9 983.0L1603.0 961.3L1603.1 1001.1L1603.4 952.6L1603.5 1001.1L1603.5 973.0L1603.6 1001.1L1603.7 967.1L1604.0 1001.1L1604.0 958.9L1604.3 1001.1L1604.5 952.5L1604.5 948.3L1604.7 1001.1L1605.0 973.1L1605.0 1000.5L1605.1 1001.1L1605.4 948.0L1605.5 972.1L1605.5 967.1L1605.8 1001.1L1605.8 963.5L1606.0 1001.1L1606.0 979.3L1606.1 1001.1L1606.3 956.5L1606.5 962.6L1606.5 966.1L1606.7 937.6L1606.7 1001.1L1607.0 962.9L1607.0 976.5L1607.2 1001.1L1607.3 948.0L1607.5 972.1L1607.5 974.0L1607.6 965.5L1607.7 1001.1L1607.9 996.0L1608.0 995.5L1608.1 1001.1L1608.2 965.6L1608.5 965.7L1608.5 947.6L1608.9 1001.1L1609.0 990.8L1609.0 961.8L1609.2 1001.1L1609.5 965.3L1609.5 983.5L1609.7 1001.1L1609.9 965.1L1610.0 975.9L1610.0 969.5L1610.1 944.8L1610.5 1001.1L1610.6 950.9L1610.8 1001.1L1611.0 987.9L1611.0 999.4L1611.2 1001.1L1611.2 960.5L1611.5 1001.1L1611.5 976.5L1611.9 956.5L1612.0 1001.1L1612.1 956.3L1612.1 1001.1L1612.4 951.4L1612.5 972.1L1612.5 971.7L1612.7 961.3L1612.7 1001.1L1613.0 967.7L1613.0 1001.1L1613.5 973.9L1613.5 981.0L1613.6 1001.1L1613.9 960.2L1614.0 971.7L1614.1 971.5L1614.2 970.0L1614.4 1001.1L1614.4 985.3L1614.5 979.4L1614.6 1001.1L1614.7 954.9L1615.0 989.9L1615.0 979.8L1615.2 1001.1L1615.2 945.3L1615.5 973.5L1615.5 961.0L1615.9 996.1L1616.0 987.4L1616.0 993.0L1616.3 1001.1L1616.4 943.7L1616.5 944.5L1616.5 994.6L1616.6 1001.1L1616.9 954.5L1617.0 982.9L1617.1 999.3L1617.1 957.3L1617.2 1001.1L1617.4 970.6L1617.5 992.3L1617.6 1001.1L1617.9 972.3L1618.0 980.6L1618.0 981.5L1618.1 1001.1L1618.5 941.6L1618.5 983.4L1618.7 1001.1L1618.9 868.5L1619.0 958.2L1619.0 980.5L1619.3 948.4L1619.4 1001.1L1619.5 960.4L1619.5 966.0L1619.6 958.3L1620.0 998.3L1620.0 1001.1L1620.4 966.4L1620.5 1001.1L1620.5 1001.1L1620.8 957.6L1621.0 966.2L1621.0 1001.1L1621.5 951.2L1621.5 961.1L1621.7 997.2L1622.0 972.3L1622.0 986.0L1622.1 949.7L1622.4 989.4L1622.5 960.6L1622.5 975.3L1622.6 1001.1L1622.8 960.4L1623.0 974.4L1623.0 989.8L1623.1 1001.1L1623.2 952.7L1623.5 964.0L1623.5 1001.1L1623.9 951.3L1624.0 961.3L1624.1 1001.1L1624.2 955.2L1624.5 969.0L1624.6 962.3L1624.9 1001.1L1624.9 960.8L1625.0 1001.1L1625.0 973.8L1625.1 1001.1L1625.2 947.2L1625.5 962.9L1625.5 958.5L1625.7 989.0L1626.0 966.2L1626.0 956.4L1626.2 996.8L1626.3 956.1L1626.5 961.6L1626.5 972.4L1626.6 960.3L1626.7 1001.1L1627.0 975.2L1627.0 969.8L1627.2 1001.1L1627.5 963.6L1627.5 976.2L1627.6 950.7L1627.9 1001.1L1628.0 995.2L1628.0 994.8L1628.5 953.8L1628.5 973.7L1628.6 1001.1L1628.8 954.6L1629.0 976.6L1629.0 983.4L1629.1 1001.1L1629.3 953.7L1629.5 1001.1L1629.5 997.1L1629.6 997.9L1629.9 970.8L1630.0 976.0L1630.0 970.9L1630.2 953.6L1630.3 1001.1L1630.5 1001.1L1630.5 961.2L1630.8 994.4L1630.9 949.2L1631.0 978.0L1631.0 985.4L1631.3 995.5L1631.5 951.6L1631.5 976.3L1631.6 1001.1L1631.7 940.9L1632.0 992.9L1632.0 965.7L1632.1 960.9L1632.3 1001.1L1632.5 986.9L1632.5 1001.1L1632.9 950.8L1633.0 961.2L1633.0 947.9L1633.1 938.4L1633.2 1001.1L1633.5 1001.1L1633.5 984.9L1633.9 1001.1L1633.9 960.0L1634.0 978.9L1634.0 978.7L1634.1 947.5L1634.2 1001.1L1634.5 963.2L1634.5 956.3L1634.7 1001.1L1634.8 949.9L1635.0 994.7L1635.0 973.4L1635.4 942.5L1635.4 1001.1L1635.5 1001.1L1635.5 983.9L1635.6 953.0L1635.8 1000.8L1636.0 954.7L1636.0 985.7L1636.1 990.0L1636.2 969.2L1636.5 982.8L1636.5 993.3L1636.6 998.3L1636.9 953.5L1637.0 985.2L1637.0 1001.1L1637.1 956.6L1637.5 979.6L1637.5 957.5L1637.6 1001.1L1638.0 987.2L1638.0 973.9L1638.2 1001.1L1638.4 958.3L1638.5 1000.0L1638.5 989.7L1638.6 1001.1L1638.9 948.3L1639.0 973.5L1639.0 994.9L1639.4 953.2L1639.5 990.9L1639.5 972.7L1639.7 956.8L1639.8 1001.1L1640.0 1001.1L1640.0 1001.1L1640.4 946.4L1640.5 986.5L1640.5 996.7L1640.6 1001.1L1640.9 951.1L1641.0 976.7L1641.0 971.9L1641.1 947.7L1641.2 1001.1L1641.5 975.3L1641.5 949.7L1641.6 1001.1L1642.0 1001.1L1642.0 1001.1L1642.2 959.9L1642.5 963.0L1642.6 974.5L1642.7 1001.1L1642.9 956.5L1643.0 1001.1L1643.0 992.6L1643.1 959.5L1643.3 1001.1L1643.5 984.2L1643.5 1001.1L1643.7 964.6L1644.0 974.8L1644.0 1001.1L1644.1 957.9L1644.5 991.0L1644.5 954.1L1644.6 1001.1L1644.9 949.9L1645.0 954.4L1645.0 955.6L1645.3 994.8L1645.5 942.4L1645.5 989.4L1645.6 952.2L1645.7 1001.1L1646.0 983.6L1646.0 956.7L1646.2 1001.1L1646.4 939.6L1646.5 997.3L1646.5 956.0L1646.6 1001.1L1647.0 1001.1L1647.0 987.2L1647.1 966.7L1647.3 1001.1L1647.5 998.4L1647.5 977.9L1647.8 954.5L1647.9 1001.1L1648.0 988.0L1648.0 1001.1L1648.2 936.6L1648.5 966.3L1648.5 955.7L1648.7 949.0L1648.9 1001.1L1649.0 993.1L1649.0 1001.1L1649.3 950.7L1649.5 979.1L1649.5 991.0L1649.8 1001.1L1650.0 947.0L1650.0 947.4L1650.5 1001.1L1650.5 957.4L1650.7 1001.1L1651.0 971.6L1651.0 972.0L1651.2 1001.1L1651.4 958.7L1651.5 959.1L1651.5 990.0L1651.7 1001.1L1652.0 957.3L1652.0 977.4L1652.2 990.3L1652.3 951.6L1652.5 958.5L1652.5 953.8L1652.6 1001.1L1652.9 951.1L1653.0 974.5L1653.0 1001.1L1653.4 951.7L1653.5 987.5L1653.5 951.2L1653.6 1001.1L1654.0 1000.4L1654.0 1001.1L1654.3 965.5L1654.5 992.2L1654.5 895.0L1654.8 1001.1L1655.0 1001.1L1655.0 966.8L1655.1 1001.1L1655.2 962.1L1655.5 994.0L1655.5 981.4L1655.7 950.9L1655.8 1001.1L1656.0 989.6L1656.0 985.6L1656.3 958.8L1656.3 1001.1L1656.5 967.0L1656.5 1001.1L1656.9 940.9L1657.0 995.8L1657.0 988.5L1657.1 1001.1L1657.3 956.1L1657.5 1001.1L1657.5 995.6L1657.6 1001.1L1658.0 961.3L1658.0 964.4L1658.1 961.8L1658.3 1001.1L1658.5 967.8L1658.5 973.2L1658.7 1001.1L1658.8 956.9L1659.0 976.6L1659.0 977.1L1659.1 1001.1L1659.5 957.5L1659.5 961.5L1659.6 1001.1L1659.9 952.2L1660.0 973.5L1660.0 980.9L1660.1 1001.1L1660.5 955.7L1660.5 972.2L1660.6 1001.1L1660.8 956.0L1661.0 973.2L1661.0 985.8L1661.1 993.6L1661.4 953.8L1661.5 968.1L1661.5 959.0L1661.6 955.5L1662.0 994.3L1662.0 966.0L1662.2 952.5L1662.3 999.3L1662.5 978.5L1662.5 1001.1L1663.0 958.9L1663.0 967.8L1663.2 960.0L1663.4 1001.1L1663.5 984.1L1663.5 971.0L1663.8 955.8L1664.0 1001.1L1664.0 949.9L1664.3 1001.1L1664.4 948.0L1664.5 1001.1L1664.5 958.7L1664.6 1001.1L1664.6 942.1L1665.0 998.3L1665.0 990.4L1665.4 1001.1L1665.4 945.4L1665.5 1001.1L1665.5 966.2L1665.8 944.5L1665.9 1001.1L1666.0 981.9L1666.0 999.3L1666.2 1001.1L1666.4 954.4L1666.5 981.8L1666.5 979.8L1666.7 952.8L1666.7 1001.1L1667.0 995.8L1667.0 1001.1L1667.1 965.9L1667.5 994.2L1667.5 977.2L1667.9 1001.1L1667.9 956.1L1668.0 1001.1L1668.0 971.4L1668.1 955.2L1668.3 1001.1L1668.5 983.9L1668.5 947.8L1668.6 1001.1L1669.0 982.3L1669.0 1001.1L1669.5 966.1L1669.5 984.2L1669.7 952.7L1669.8 1001.1L1670.0 980.1L1670.0 974.8L1670.1 967.5L1670.1 1001.1L1670.5 994.9L1670.5 972.2L1670.9 968.2L1670.9 1001.1L1671.0 1001.1L1671.0 988.9L1671.1 1001.1L1671.3 950.5L1671.5 986.9L1671.5 1001.1L1671.8 948.2L1672.0 980.4L1672.0 1001.1L1672.4 967.3L1672.5 981.2L1672.5 1001.1L1672.8 957.3L1673.0 984.6L1673.0 996.7L1673.1 1001.1L1673.4 944.5L1673.5 1001.1L1673.5 974.0L1673.8 1001.1L1673.8 953.6L1674.0 970.9L1674.0 970.3L1674.1 948.8L1674.2 1001.1L1674.5 985.8L1674.5 1001.1L1674.7 944.1L1675.0 956.6L1675.0 981.5L1675.1 957.0L1675.4 1001.1L1675.5 1001.1L1675.5 985.0L1675.6 1001.1L1675.7 951.2L1676.0 977.0L1676.0 969.4L1676.1 1001.1L1676.5 952.4L1676.5 976.4L1676.6 1001.1L1676.7 953.0L1677.0 957.0L1677.0 988.1L1677.1 1001.1L1677.1 955.6L1677.5 981.4L1677.5 1001.1L1677.8 959.7L1678.0 1001.1L1678.0 997.1L1678.1 954.1L1678.1 1001.1L1678.5 977.1L1678.5 981.6L1678.7 953.3L1678.9 1001.1L1679.0 966.5L1679.0 955.5L1679.0 943.9L1679.1 1001.1L1679.5 1001.1L1679.5 970.5L1679.7 1001.1L1679.9 963.1L1680.0 1001.1L1680.0 970.7L1680.2 954.0L1680.4 1001.1L1680.5 970.0L1680.5 996.9L1680.6 1001.1L1680.9 951.4L1681.0 992.8L1681.0 961.6L1681.1 998.8L1681.4 952.3L1681.5 968.6L1681.5 961.1L1681.8 1001.1L1682.0 957.1L1682.0 960.1L1682.3 942.0L1682.4 995.2L1682.5 963.5L1682.5 976.2L1682.6 1001.1L1682.7 956.6L1683.0 973.4L1683.0 985.7L1683.1 949.5L1683.3 1001.1L1683.5 979.0L1683.5 977.0L1683.6 1001.1L1683.9 947.0L1684.0 1001.1L1684.0 967.0L1684.2 1001.1L1684.3 948.5L1684.5 995.0L1684.5 1001.1L1684.6 972.7L1685.0 974.1L1685.0 1001.1L1685.4 945.1L1685.5 1001.1L1685.5 986.8L1685.9 916.0L1686.0 1001.1L1686.0 1001.1L1686.1 959.0L1686.5 970.5L1686.5 965.4L1686.7 1001.1L1686.9 951.3L1687.0 967.6L1687.0 983.0L1687.1 1001.1L1687.3 958.4L1687.5 962.4L1687.5 956.2L1687.6 948.4L1687.7 1001.1L1688.0 963.6L1688.0 979.6L1688.0 945.6L1688.3 994.0L1688.5 958.5L1688.5 960.1L1688.8 1001.1L1689.0 979.2L1689.0 980.5L1689.1 1001.1L1689.2 947.1L1689.5 984.4L1689.5 987.5L1689.8 954.6L1689.9 1001.1L1690.0 977.7L1690.0 984.3L1690.1 1001.1L1690.4 961.1L1690.5 988.8L1690.5 966.8L1690.6 958.3L1690.6 1001.1L1691.0 988.9L1691.0 961.6L1691.3 1001.1L1691.5 956.4L1691.5 961.7L1691.6 959.5L1691.8 1001.1L1692.0 974.2L1692.0 956.9L1692.2 1001.1L1692.2 949.5L1692.5 982.7L1692.5 987.8L1692.7 1001.1L1693.0 955.3L1693.0 973.6L1693.2 1001.1L1693.5 963.7L1693.5 973.7L1693.7 1001.1L1693.9 950.0L1694.0 990.3L1694.0 1001.1L1694.4 955.8L1694.5 957.1L1694.5 968.2L1694.7 1001.1L1694.7 952.1L1695.0 987.3L1695.0 1001.1L1695.2 945.7L1695.5 989.9L1695.5 964.3L1695.6 1001.1L1695.7 960.0L1696.0 988.3L1696.0 999.8L1696.2 1001.1L1696.5 955.4L1696.5 966.6L1696.7 958.7L1696.7 1001.1L1697.0 980.2L1697.0 1001.1L1697.3 952.7L1697.5 967.8L1697.5 1001.1L1698.0 962.1L1698.0 975.9L1698.0 1001.1L1698.3 959.5L1698.5 990.0L1698.5 976.9L1698.7 1001.1L1698.9 973.6L1699.0 977.1L1699.0 980.5L1699.3 941.2L1699.5 1001.1L1699.5 985.2L1699.6 967.2L1699.7 1001.1L1700.0 985.4L1700.0 981.9L1700.1 1001.1L1700.2 948.6L1700.5 1001.1L1700.5 980.0L1700.6 1001.1L1700.7 959.1L1701.0 1001.1L1701.0 1001.1L1701.2 944.4L1701.5 989.9L1701.5 988.3L1701.6 954.9L1701.9 993.3L1702.0 958.9L1702.0 977.1L1702.4 949.1L1702.4 1001.1L1702.5 987.7L1702.5 972.6L1702.7 1001.1L1702.8 951.5L1703.0 960.4L1703.0 981.3L1703.3 1001.1L1703.5 962.1L1703.5 967.0L1703.8 1001.1L1703.8 957.8L1704.0 990.1L1704.0 988.2L1704.1 1001.1L1704.2 949.4L1704.5 982.6L1704.5 971.3L1704.7 1001.1L1704.7 958.2L1705.0 979.3L1705.0 1001.1L1705.3 961.4L1705.5 976.1L1705.5 1001.1L1705.5 963.1L1706.0 1001.1L1706.0 987.6L1706.1 1001.1L1706.2 948.1L1706.5 963.0L1706.5 976.3L1706.6 1001.1L1706.8 974.2L1707.0 1001.1L1707.0 971.6L1707.1 1001.1L1707.4 956.4L1707.5 1001.1L1707.5 994.0L1707.6 1001.1L1707.9 948.4L1708.0 976.4L1708.0 979.3L1708.2 957.6L1708.3 1001.1L1708.5 994.5L1708.5 1001.1L1709.0 948.3L1709.0 966.9L1709.1 1001.1L1709.2 963.9L1709.5 988.9L1709.5 980.8L1709.6 963.7L1709.6 1001.1L1710.0 966.9L1710.0 965.5L1710.1 1001.1L1710.3 946.5L1710.5 978.4L1710.5 990.7L1710.6 1001.1L1710.6 971.3L1711.0 989.5L1711.0 1001.1L1711.4 944.1L1711.5 1001.1L1711.5 979.5L1711.7 1001.1L1711.8 957.4L1712.0 978.5L1712.0 975.0L1712.2 1001.1L1712.3 953.5L1712.5 973.4L1712.5 970.1L1712.6 958.6L1713.0 1001.1L1713.0 974.3L1713.0 986.1L1713.3 1001.1L1713.4 943.7L1713.5 986.3L1713.5 978.0L1713.6 949.5L1713.7 1000.9L1714.0 964.1L1714.0 909.0L1714.1 1001.1L1714.5 966.7L1714.5 984.6L1714.8 951.0L1714.9 1001.1L1715.0 972.6L1715.0 977.0L1715.1 1001.1L1715.1 958.9L1715.5 986.4L1715.5 987.1L1715.6 1001.1L1715.8 962.3L1716.0 1001.1L1716.0 984.8L1716.2 1001.1L1716.5 951.9L1716.5 962.6L1716.7 1001.1L1716.9 947.5L1717.0 958.7L1717.0 991.0L1717.1 1001.1L1717.1 953.6L1717.5 1001.1L1717.5 996.8L1717.6 1001.1L1717.8 963.9L1718.0 969.6L1718.0 977.0L1718.3 997.8L1718.4 955.5L1718.5 963.3L1718.5 1001.1L1718.8 960.0L1719.0 1001.1L1719.0 963.6L1719.2 1001.1L1719.3 951.4L1719.5 989.7L1719.5 1001.1L1719.6 954.5L1720.0 958.5L1720.0 970.5L1720.2 1001.1L1720.4 959.1L1720.5 972.8L1720.5 1001.1L1720.8 968.8L1721.0 1001.1L1721.0 940.3L1721.0 1001.1L1721.5 981.4L1721.5 976.1L1721.5 963.8L1721.6 1001.1L1722.0 979.5L1722.0 966.4L1722.3 1001.1L1722.5 965.0L1722.5 971.4L1722.6 1001.1L1722.9 948.7L1723.0 991.0L1723.0 1001.1L1723.3 959.3L1723.5 988.7L1723.5 984.8L1723.7 949.2L1723.9 1001.1L1724.0 957.3L1724.0 957.7L1724.2 1001.1L1724.3 948.3L1724.5 985.4L1724.5 988.5L1724.6 1001.1L1724.8 961.1L1725.0 986.2L1725.0 989.0L1725.1 1001.1L1725.4 952.6L1725.5 963.9L1725.5 978.7L1725.6 1001.1L1726.0 955.1L1726.0 958.0L1726.1 1001.1L1726.1 946.1L1726.5 975.6L1726.5 1001.1L1727.0 963.9L1727.0 981.9L1727.1 1001.1L1727.2 950.5L1727.5 999.8L1727.5 975.7L1727.6 1001.1L1727.8 949.9L1728.0 1001.1L1728.0 970.1L1728.1 1001.1L1728.5 963.2L1728.5 999.3L1728.5 983.6L1728.7 1001.1L1728.8 958.2L1729.0 1001.1L1729.0 962.0L1729.2 952.5L1729.2 1001.1L1729.5 1001.1L1729.5 959.9L1729.6 948.0L1729.7 1001.1L1730.0 961.4L1730.0 999.5L1730.0 1001.1L1730.3 957.6L1730.5 974.6L1730.5 980.1L1730.7 952.6L1731.0 1001.1L1731.0 995.3L1731.0 1001.1L1731.2 958.6L1731.5 963.6L1731.5 983.6L1731.6 1001.1L1731.8 964.2L1732.0 968.3L1732.0 985.4L1732.1 1001.1L1732.2 947.4L1732.5 963.1L1732.5 961.7L1732.6 1001.1L1732.8 955.7L1733.0 1001.1L1733.0 969.9L1733.1 1001.1L1733.2 944.8L1733.5 1001.1L1733.5 967.3L1733.6 1001.1L1733.8 952.1L1734.0 984.0L1734.0 971.7L1734.1 1001.1L1734.3 940.0L1734.5 989.4L1734.5 1001.1L1734.8 949.1L1735.0 1001.1L1735.0 1001.1L1735.5 949.5L1735.5 1001.1L1735.6 940.4L1736.0 978.5L1736.0 1001.1L1736.2 959.8L1736.5 992.3L1736.5 964.8L1736.6 956.2L1736.6 1001.1L1737.0 983.8L1737.0 961.7L1737.1 1001.1L1737.5 1000.6L1737.5 993.7L1737.5 1001.1L1737.6 940.6L1738.0 981.6L1738.0 958.4L1738.1 1001.1L1738.5 992.7L1738.5 979.4L1738.6 1001.1L1738.9 960.8L1739.0 982.7L1739.0 977.8L1739.1 1001.1L1739.4 920.5L1739.5 968.7L1739.5 958.7L1739.6 1001.1L1739.6 951.4L1740.0 961.6L1740.0 995.9L1740.1 1001.1L1740.4 956.5L1740.5 985.5L1740.5 963.7L1740.6 1001.1L1740.9 961.2L1741.0 982.2L1741.0 1001.1L1741.3 953.2L1741.5 1001.1L1741.5 1001.1L1741.6 961.0L1742.0 998.6L1742.0 973.2L1742.2 948.9L1742.3 1001.1L1742.5 957.5L1742.5 965.6L1742.5 1001.1L1742.9 938.0L1743.0 962.4L1743.0 982.2L1743.1 1001.1L1743.4 952.3L1743.5 964.0L1743.5 994.2L1743.6 1001.1L1743.7 966.2L1744.0 997.8L1744.0 992.0L1744.1 955.4L1744.3 1001.1L1744.5 976.7L1744.5 1001.1L1744.9 955.6L1745.0 1001.1L1745.0 984.2L1745.2 1001.1L1745.5 951.0L1745.5 1001.1L1745.9 949.9L1746.0 1001.1L1746.0 966.7L1746.0 945.3L1746.4 1001.1L1746.5 961.0L1746.5 962.2L1746.6 952.4L1746.7 1001.1L1747.0 971.1L1747.0 961.7L1747.1 1001.1L1747.5 953.3L1747.5 975.8L1747.5 1001.1L1747.6 945.0L1748.0 977.4L1748.0 955.0L1748.1 1001.1L1748.2 948.9L1748.5 981.9L1748.5 1001.1L1748.9 948.4L1749.0 964.1L1749.0 967.2L1749.2 1001.1L1749.2 959.7L1749.5 975.1L1749.5 958.0L1749.8 1001.1L1749.9 954.7L1750.0 977.3L1750.0 976.6L1750.0 1001.1L1750.3 949.4L1750.5 972.0L1750.5 978.0L1750.6 1001.1L1750.7 949.2L1751.0 982.0L1751.0 1001.1L1751.1 953.2L1751.5 977.2L1751.5 937.0L1751.6 1001.1L1752.0 1001.1L1752.0 987.2L1752.3 1001.1L1752.5 956.8L1752.5 1001.1L1752.8 946.0L1753.0 976.9L1753.0 1000.4L1753.1 1001.1L1753.3 961.7L1753.5 985.0L1753.5 998.4L1753.6 952.3L1754.0 1001.1L1754.0 1001.1L1754.2 947.5L1754.5 971.4L1754.5 1001.1L1754.9 952.5L1755.0 966.4L1755.0 1001.1L1755.3 958.7L1755.5 980.5L1755.5 944.5L1755.8 1001.1L1756.0 986.2L1756.0 1001.1L1756.2 966.2L1756.5 997.0L1756.5 977.6L1756.8 999.9L1757.0 949.2L1757.0 976.4L1757.2 942.6L1757.3 1001.1L1757.5 982.2L1757.5 972.8L1757.6 1001.1L1757.8 951.7L1758.0 965.3L1758.0 982.6L1758.1 953.5L1758.1 1001.1L1758.5 1001.1L1758.5 989.0L1758.8 1001.1L1758.9 939.8L1759.0 966.7L1759.0 1001.1L1759.1 951.0L1759.5 1001.1L1759.5 958.7L1759.6 1001.1L1760.0 1001.1L1760.0 956.7L1760.2 1001.1L1760.4 952.1L1760.5 971.3L1760.5 981.5L1760.7 1001.1L1760.9 952.2L1761.0 966.9L1761.0 966.9L1761.3 1001.1L1761.5 958.1L1761.5 975.9L1761.5 993.8L1761.6 1001.1L1761.8 951.8L1762.0 954.2L1762.0 960.9L1762.3 1001.1L1762.5 1001.1L1762.5 961.0L1762.7 948.1L1762.7 1001.1L1763.0 980.6L1763.0 964.5L1763.2 1001.1L1763.5 1001.1L1763.5 1001.1L1763.6 955.9L1764.0 1001.1L1764.0 1001.1L1764.2 950.1L1764.5 961.9L1764.5 986.3L1764.6 1001.1L1765.0 948.9L1765.0 1001.1L1765.3 951.9L1765.5 976.9L1765.5 986.1L1765.6 1001.1L1765.7 951.2L1766.0 979.3L1766.0 961.2L1766.3 1001.1L1766.5 993.7L1766.5 981.4L1766.6 995.2L1766.9 952.6L1767.0 984.6L1767.0 986.6L1767.1 1001.1L1767.4 955.1L1767.5 1001.1L1767.5 967.4L1767.6 1001.1L1767.8 958.8L1768.0 1001.1L1768.0 975.2L1768.2 955.8L1768.3 1001.1L1768.5 974.9L1768.5 962.4L1768.8 949.2L1768.9 1001.1L1769.0 981.3L1769.0 992.5L1769.1 1001.1L1769.3 962.1L1769.5 964.4L1769.5 993.7L1769.6 1001.1L1769.9 960.0L1770.0 986.7L1770.0 1001.1L1770.3 959.5L1770.5 968.8L1770.5 943.0L1770.5 1001.1L1771.0 985.0L1771.0 1001.1L1771.2 954.7L1771.5 979.8L1771.5 977.3L1771.6 948.2L1771.9 1000.0L1772.0 986.8L1772.0 992.2L1772.2 1001.1L1772.5 955.5L1772.5 987.0L1772.5 970.9L1772.6 959.2L1772.8 1001.1L1773.0 971.3L1773.0 989.4L1773.0 1001.1L1773.3 953.6L1773.5 1001.1L1773.5 957.9L1773.8 954.3L1774.0 1001.1L1774.0 980.3L1774.0 1001.1L1774.1 961.4L1774.5 980.7L1774.5 999.1L1774.8 954.7L1774.8 1001.1L1775.0 958.8L1775.0 960.2L1775.3 1001.1L1775.4 954.3L1775.5 974.2L1775.5 977.9L1775.7 956.4L1775.9 1001.1L1776.0 965.2L1776.0 977.2L1776.1 1001.1L1776.2 944.3L1776.5 1001.1L1776.5 972.9L1776.6 952.7L1776.6 1001.1L1777.0 961.2L1777.0 967.5L1777.1 1001.1L1777.4 964.6L1777.5 999.2L1777.5 995.7L1777.6 965.9L1777.6 1001.1L1778.0 980.8L1778.0 1001.1L1778.2 950.0L1778.5 984.1L1778.5 990.1L1778.8 1001.1L1779.0 952.9L1779.0 992.8L1779.0 1001.1L1779.3 954.2L1779.5 969.7L1779.5 943.3L1779.5 1001.1L1780.0 966.7L1780.0 1001.1L1780.5 945.8L1780.5 979.5L1780.6 1001.1L1780.8 955.8L1781.0 983.2L1781.0 960.6L1781.1 1001.1L1781.1 951.9L1781.5 959.3L1781.5 988.2L1781.7 949.5L1781.7 1001.1L1782.0 985.1L1782.0 1001.1L1782.2 971.0L1782.5 984.1L1782.5 965.4L1782.6 953.4L1783.0 1001.1L1783.0 957.1L1783.0 1001.1L1783.3 946.1L1783.5 973.8L1783.5 1001.1L1784.0 921.0L1784.0 981.8L1784.0 1001.1L1784.1 945.1L1784.5 1001.1L1784.5 975.8L1784.8 1001.1L1784.9 953.6L1785.0 958.2L1785.0 977.2L1785.1 953.8L1785.2 1001.1L1785.5 954.9L1785.5 1001.1L1785.8 951.1L1786.0 970.1L1786.0 1001.1L1786.1 959.6L1786.5 994.2L1786.5 971.6L1786.6 1001.1L1786.6 947.8L1787.0 970.3L1787.0 973.4L1787.2 1001.1L1787.4 950.1L1787.5 964.7L1787.5 989.4L1787.6 1001.1L1787.7 946.9L1788.0 1001.1L1788.0 998.1L1788.2 950.8L1788.3 1001.1L1788.5 974.2L1788.5 979.1L1788.8 1001.1L1788.9 951.6L1789.0 961.1L1789.0 968.5L1789.2 1001.1L1789.3 951.6L1789.5 1001.1L1789.5 977.7L1789.7 954.5L1789.8 1001.1L1790.0 974.9L1790.0 964.5L1790.1 1001.1L1790.3 947.7L1790.5 974.6L1790.5 988.8L1790.6 1001.1L1790.7 953.9L1791.0 990.0L1791.0 970.4L1791.2 1001.1L1791.2 947.2L1791.5 964.8L1791.5 968.9L1791.8 1001.1L1791.8 950.8L1792.0 965.1L1792.0 1001.1L1792.1 956.0L1792.5 972.9L1792.5 984.1L1792.7 952.2L1792.7 1001.1L1793.0 1001.1L1793.0 1001.1L1793.2 964.0L1793.5 987.5L1793.5 954.4L1793.7 945.7L1793.8 1001.1L1794.0 1001.1L1794.0 965.5L1794.1 1001.1L1794.5 971.5L1794.5 971.8L1794.6 1001.1L1794.9 960.7L1795.0 995.3L1795.0 1001.1L1795.3 959.7L1795.5 976.2L1795.5 975.5L1795.6 1001.1L1795.7 958.6L1796.0 984.8L1796.0 977.5L1796.2 1001.1L1796.4 956.0L1796.5 984.6L1796.5 962.7L1796.5 1001.1L1796.7 949.9L1797.0 974.5L1797.0 979.6L1797.3 956.7L1797.3 1001.1L1797.5 1001.1L1797.5 992.3L1797.8 1001.1L1797.9 959.8L1798.0 978.8L1798.0 975.7L1798.2 1001.1L1798.5 960.7L1798.5 973.6L1798.6 1001.1L1798.7 950.0L1799.0 967.1L1799.0 949.4L1799.2 944.2L1799.3 1001.1L1799.5 962.9L1799.5 1001.0L1799.9 1001.1L1800.0 952.1L1800.0 956.5L1800.1 1001.1L1800.2 953.9L1800.5 1001.1L1800.5 989.7L1800.6 1001.1L1801.0 960.7L1801.0 966.8L1801.0 966.5L1801.0 965.1L1801.2 1001.1L1801.5 993.4L1801.5 977.6L1801.7 1001.1L1801.9 954.7L1802.0 989.1L1802.0 1001.1L1802.5 951.3L1802.5 980.9L1802.5 943.4L1802.6 1001.0L1803.0 962.9L1803.0 1001.1L1803.2 959.5L1803.5 971.9L1803.5 1001.1L1803.9 964.0L1804.0 982.3L1804.0 974.6L1804.1 945.2L1804.2 1001.1L1804.5 996.3L1804.5 968.4L1804.5 1001.1L1804.8 961.6L1805.0 975.5L1805.0 984.6L1805.0 944.5L1805.1 1001.1L1805.5 1001.1L1805.5 1001.1L1805.7 956.0L1806.0 980.2L1806.0 1001.1L1806.5 948.8L1806.5 975.0L1806.6 961.5L1806.9 1001.1L1807.0 996.3L1807.0 961.6L1807.1 1001.1L1807.4 946.5L1807.5 986.1L1807.5 1001.1L1807.6 950.4L1808.0 974.2L1808.0 972.9L1808.1 954.5L1808.2 1001.1L1808.5 1000.3L1808.5 989.5L1808.7 945.5L1808.7 1001.1L1809.0 1001.1L1809.0 971.8L1809.0 1001.1L1809.4 952.7L1809.5 980.2L1809.5 992.9L1809.6 949.6L1809.7 1001.1L1810.0 953.7L1810.0 1001.1L1810.2 953.0L1810.5 973.3L1810.5 967.9L1810.7 953.4L1810.7 1001.1L1811.0 961.8L1811.0 978.1L1811.0 953.0L1811.1 1001.1L1811.5 987.6L1811.5 1001.1L1811.8 952.1L1812.0 985.8L1812.0 1001.1L1812.5 958.2L1812.5 966.6L1812.6 1001.1L1812.7 950.9L1813.0 1001.1L1813.0 967.6L1813.0 1001.1L1813.1 951.6L1813.5 988.9L1813.5 1001.1L1813.6 946.1L1814.0 1001.1L1814.0 952.2L1814.1 1001.1L1814.5 1001.1L1814.5 961.3L1814.5 960.1L1814.6 1001.1L1815.0 971.8L1815.0 968.4L1815.2 1001.1L1815.4 952.5L1815.5 1001.1L1815.5 1001.1L1815.8 952.6L1816.0 986.0L1816.0 990.0L1816.1 1001.1L1816.3 952.9L1816.5 999.0L1816.5 984.3L1816.7 1001.1L1816.8 954.5L1817.0 1001.1L1817.0 1001.1L1817.4 941.9L1817.5 951.0L1817.5 970.5L1817.6 1001.1L1817.8 963.7L1818.0 1001.1L1818.0 970.1L1818.0 951.2L1818.1 1001.1L1818.5 986.8L1818.5 969.3L1818.6 1001.1L1818.8 948.9L1819.0 995.1L1819.0 991.0L1819.1 950.4L1819.1 1001.1L1819.5 965.4L1819.5 988.1L1819.5 953.3L1819.6 1001.1L1820.0 981.3L1820.0 1001.1L1820.3 956.1L1820.5 964.5L1820.5 982.0L1820.5 1001.1L1820.9 964.1L1821.0 994.9L1821.0 1001.1L1821.4 951.9L1821.5 991.0L1821.5 956.3L1821.5 1001.1L1821.6 947.3L1822.0 1001.1L1822.0 984.0L1822.1 1001.1L1822.1 933.0L1822.5 1001.1L1822.5 983.1L1822.6 1001.1L1822.9 956.1L1823.0 967.4L1823.0 1001.1L1823.0 960.8L1823.5 973.5L1823.5 957.0L1823.5 1001.1L1823.6 954.0L1824.0 981.4L1824.0 969.2L1824.0 948.6L1824.2 1001.1L1824.5 982.5L1824.5 1001.1L1824.6 941.2L1825.0 946.5L1825.0 973.5L1825.0 1001.1L1825.4 956.6L1825.5 1001.1L1825.5 984.4L1825.5 1001.1L1825.8 952.2L1826.0 984.6L1826.0 979.5L1826.1 1001.1L1826.2 958.6L1826.5 970.1L1826.5 984.4L1826.7 950.2L1826.7 1001.1L1827.0 967.0L1827.0 977.9L1827.2 1001.1L1827.2 947.8L1827.5 1001.1L1827.5 1001.1L1827.6 951.8L1828.0 981.3L1828.0 948.4L1828.1 944.0L1828.3 1001.1L1828.5 963.8L1828.5 1000.7L1828.7 960.8L1828.7 1001.1L1829.0 1001.1L1829.0 1001.1L1829.5 956.9L1829.5 993.0L1829.7 1001.1L1829.9 960.8L1830.0 967.5L1830.0 1001.1L1830.3 962.7L1830.5 1001.1L1830.5 1001.1L1830.6 957.1L1831.0 971.5L1831.0 973.3L1831.1 1001.1L1831.4 946.0L1831.5 973.3L1831.5 1001.1L1831.7 949.1L1832.0 955.9L1832.0 976.0L1832.1 1001.1L1832.3 947.2L1832.5 985.6L1832.5 948.2L1832.5 1001.1L1833.0 986.2L1833.0 991.7L1833.1 1001.1L1833.3 953.3L1833.5 1001.1L1833.5 967.0L1833.5 1001.1L1833.8 958.1L1834.0 1001.1L1834.0 970.2L1834.0 1001.1L1834.3 941.9L1834.5 976.8L1834.5 1001.1L1834.6 950.1L1835.0 1001.1L1835.0 1000.3L1835.1 1001.1L1835.3 955.3L1835.5 971.4L1835.5 995.0L1835.6 1001.1L1835.7 962.2L1836.0 991.3L1836.0 955.0L1836.1 949.4L1836.5 1001.1L1836.5 972.6L1836.5 948.2L1836.6 1001.1L1837.0 981.0L1837.0 975.4L1837.0 949.2L1837.1 1001.1L1837.5 986.7L1837.5 971.8L1837.6 1001.1L1837.9 950.3L1838.0 972.3L1838.0 1001.1L1838.2 958.6L1838.5 977.5L1838.5 981.5L1838.5 1001.1L1838.9 941.1L1839.0 961.6L1839.0 1001.1L1839.3 933.6L1839.5 978.1L1839.5 977.4L1839.5 1001.1L1839.9 956.2L1840.0 991.1L1840.0 977.5L1840.1 1001.1L1840.4 949.7L1840.5 1001.1L1840.5 981.3L1840.6 949.0L1840.7 1001.1L1841.0 970.7L1841.0 1001.1L1841.2 953.4L1841.5 968.6L1841.5 1001.1L1841.7 960.6L1842.0 1001.1L1842.0 953.8L1842.2 1001.1L1842.5 970.2L1842.5 1001.1L1842.8 957.6L1843.0 967.0L1843.0 974.9L1843.1 1001.1L1843.3 963.8L1843.5 991.4L1843.5 1001.1L1843.9 951.7L1844.0 962.5L1844.0 967.4L1844.1 955.3L1844.3 1001.1L1844.5 971.7L1844.5 965.6L1844.6 953.1L1844.7 1001.1L1845.0 969.9L1845.0 994.5L1845.1 1001.1L1845.5 953.7L1845.5 991.5L1845.5 1001.1L1846.0 953.9L1846.0 993.6L1846.0 990.2L1846.1 1001.1L1846.3 959.4L1846.5 980.0L1846.5 973.4L1846.5 1001.1L1847.0 957.1L1847.0 980.1L1847.0 991.7L1847.0 1001.1L1847.3 954.4L1847.5 962.7L1847.5 963.4L1847.5 1001.1L1847.6 948.5L1848.0 985.4L1848.0 1001.1L1848.5 939.7L1848.5 994.6L1848.5 996.1L1848.6 1001.1L1848.7 947.3L1849.0 993.5L1849.0 1000.2L1849.2 956.1L1849.2 1001.1L1849.5 1001.1L1849.5 984.7L1849.6 1001.1L1849.8 950.9L1850.0 984.7L1850.0 1001.1L1850.4 950.8L1850.5 1001.1L1850.5 1001.1L1850.6 956.6L1851.0 980.7L1851.0 962.0L1851.1 1001.1L1851.3 953.2L1851.5 988.9L1851.5 991.9L1851.6 1001.1L1851.8 950.1L1852.0 982.4L1852.0 963.2L1852.1 1001.1L1852.1 943.4L1852.5 1001.1L1852.5 983.3L1852.5 1001.1L1852.7 939.6L1853.0 963.2L1853.0 1001.1L1853.1 957.2L1853.5 994.1L1853.5 973.6L1853.6 1001.1L1853.8 957.3L1854.0 1001.1L1854.0 963.1L1854.0 1001.1L1854.1 949.5L1854.5 970.8L1854.5 988.0L1854.5 1001.1L1854.9 958.7L1855.0 995.6L1855.0 963.0L1855.0 1001.1L1855.4 959.0L1855.5 990.9L1855.5 964.4L1855.6 1001.1L1855.9 944.0L1856.0 950.4L1856.0 957.4L1856.1 1001.1L1856.5 945.0L1856.5 978.4L1856.5 1001.1L1856.5 947.5L1857.0 977.7L1857.0 992.9L1857.0 1001.1L1857.2 952.6L1857.5 978.7L1857.5 1001.1L1857.6 963.7L1858.0 969.9L1858.0 965.5L1858.1 1001.1L1858.2 953.3L1858.5 996.9L1858.5 1001.1L1858.8 946.1L1859.0 982.3L1859.0 983.4L1859.0 1001.1L1859.2 951.0L1859.5 981.7L1859.5 994.3L1859.5 1001.1L1859.9 951.3L1860.0 973.1L1860.0 1001.1L1860.1 954.3L1860.5 1000.3L1860.5 983.0L1860.6 1001.1L1860.8 936.5L1861.0 966.8L1861.0 972.9L1861.2 942.7L1861.2 1001.1L1861.5 968.2L1861.5 1001.1L1861.7 944.3L1862.0 976.0L1862.0 996.4L1862.1 1001.1L1862.3 948.2L1862.5 951.7L1862.5 984.3L1862.7 1001.1L1862.9 948.9L1863.0 983.4L1863.0 959.9L1863.0 1001.1L1863.4 957.7L1863.5 974.8L1863.5 964.2L1863.6 1001.1L1863.6 956.6L1864.0 970.2L1864.0 946.4L1864.5 1001.1L1864.5 976.9L1864.6 1001.1L1865.0 946.1L1865.0 947.0L1865.0 977.9L1865.1 1001.1L1865.4 958.4L1865.5 1001.1L1865.5 973.0L1865.5 1001.1L1865.9 947.8L1866.0 959.9L1866.0 1001.1L1866.4 950.2L1866.5 998.0L1866.5 962.5L1866.5 1001.1L1866.7 952.3L1867.0 966.2L1867.0 980.1L1867.1 959.6L1867.2 1001.1L1867.5 971.5L1867.5 976.5L1867.6 1001.1L1867.8 947.7L1868.0 976.3L1868.0 998.5L1868.0 1001.1L1868.3 948.4L1868.5 981.4L1868.5 989.5L1868.5 1001.1L1868.9 947.0L1869.0 991.3L1869.0 971.8L1869.1 1001.1L1869.3 944.3L1869.5 967.6L1869.5 976.1L1869.7 943.1L1869.8 1001.1L1870.0 1001.1L1870.0 964.3L1870.0 1001.1L1870.1 962.3L1870.5 984.5L1870.5 958.6L1870.5 1001.1L1870.9 951.5L1871.0 1001.1L1871.0 1001.1L1871.3 943.6L1871.5 963.0L1871.5 985.3L1871.6 1001.1L1871.8 945.6L1872.0 987.0L1872.0 982.2L1872.0 1001.1L1872.2 955.1L1872.5 964.3L1872.5 970.3L1872.7 1001.1L1872.7 956.7L1873.0 962.1L1873.0 962.3L1873.2 1001.1L1873.5 952.0L1873.5 985.5L1873.5 981.6L1873.5 965.9L1873.5 1001.1L1874.0 981.8L1874.0 965.2L1874.1 1001.1L1874.2 956.6L1874.5 991.4L1874.5 984.4L1874.6 1001.1L1874.7 957.8L1875.0 977.0L1875.0 990.3L1875.1 1001.1L1875.2 961.3L1875.5 1001.1L1875.5 970.6L1875.6 1001.1L1875.8 952.9L1876.0 994.5L1876.0 968.1L1876.1 1001.1L1876.5 947.5L1876.5 960.3L1876.5 990.1L1876.5 1001.1L1876.6 959.9L1877.0 1001.1L1877.0 977.3L1877.0 1001.1L1877.1 946.3L1877.5 986.2L1877.5 995.5L1877.6 1001.1L1877.9 952.2L1878.0 1001.1L1878.0 999.7L1878.0 955.0L1878.0 1001.1L1878.5 998.1L1878.5 981.1L1878.6 1001.1L1878.8 954.2L1879.0 985.0L1879.0 1001.1L1879.2 965.1L1879.5 993.2L1879.5 972.4L1879.5 1001.1L1879.8 952.8L1880.0 1001.1L1880.0 1001.1L1880.3 953.5L1880.5 973.0L1880.5 973.5L1880.7 1001.1L1881.0 954.1L1881.0 982.2L1881.0 981.8L1881.1 1001.1L1881.4 949.5L1881.5 999.9L1881.5 998.8L1881.6 1001.1L1882.0 941.6L1882.0 1001.1L1882.0 957.5L1882.1 1001.1L1882.3 947.0L1882.5 1001.1L1882.5 1001.1L1883.0 941.4L1883.0 1001.1L1883.0 968.4L1883.0 1001.1L1883.3 958.4L1883.5 1001.1L1883.5 973.0L1883.5 1001.1L1883.8 949.3L1884.0 960.2L1884.0 970.9L1884.0 1001.1L1884.3 935.5L1884.5 1001.1L1884.5 964.9L1884.6 1001.1L1884.7 962.4L1885.0 979.3L1885.0 988.3L1885.2 953.6L1885.3 1001.1L1885.5 961.3L1885.5 989.3L1885.5 962.6L1885.6 1001.1L1886.0 985.5L1886.0 982.9L1886.1 1001.1L1886.2 959.2L1886.5 985.3L1886.5 945.5L1886.5 1001.1L1887.0 1001.1L1887.0 970.0L1887.1 1001.1L1887.2 954.5L1887.5 967.6L1887.5 985.7L1887.6 1001.1L1887.8 958.6L1888.0 994.3L1888.0 997.6L1888.0 1001.1L1888.1 947.8L1888.5 1001.1L1888.5 1001.1L1888.8 954.6L1889.0 974.8L1889.0 981.1L1889.1 1001.1L1889.1 957.7L1889.5 973.1L1889.5 971.6L1889.7 947.3L1889.8 1001.1L1890.0 989.9L1890.0 970.9L1890.1 1001.1L1890.4 945.0L1890.5 949.6L1890.5 949.2L1890.6 1001.1L1891.0 959.2L1891.0 997.1L1891.0 1001.1L1891.1 949.2L1891.5 1001.1L1891.5 1000.5L1891.6 1001.1L1891.6 960.2L1892.0 994.4L1892.0 993.3L1892.1 951.4L1892.1 1001.1L1892.5 994.9L1892.5 973.8L1892.5 1001.1L1892.7 946.9L1893.0 1001.1L1893.0 962.6L1893.1 1001.1L1893.2 939.5L1893.5 986.7L1893.5 956.0L1893.7 1001.1L1894.0 952.2L1894.0 1001.1L1894.0 1001.1L1894.2 951.1L1894.5 962.3L1894.5 1001.1L1894.7 948.3L1895.0 965.9L1895.0 1001.1L1895.3 950.2L1895.5 983.0L1895.5 1001.1L1895.9 950.9L1896.0 968.2L1896.0 975.0L1896.0 1001.1L1896.3 957.0L1896.5 989.5L1896.5 955.2L1896.6 1001.1L1896.6 946.7L1897.0 981.9L1897.0 964.4L1897.1 1001.1L1897.4 947.4L1897.5 990.3L1897.5 1001.1L1897.9 948.8L1898.0 972.7L1898.0 958.9L1898.0 1001.1L1898.1 948.8L1898.5 991.5L1898.5 973.8L1898.5 1001.1L1898.9 960.5L1899.0 960.9L1899.0 968.2L1899.0 1001.1L1899.2 945.0L1899.5 970.1"/>
<g font-family="Liberation Sans, Arial, sans-serif" font-size="11" text-anchor="middle" fill="#000">
<rect x="1095.0" y="405" width="9" height="13" fill="#efefef"/><text x="1099.5" y="415">1</text>
<rect x="1279.5" y="831" width="9" height="13" fill="#fff"/><text x="1284.0" y="841">2</text>
<rect x="1387.5" y="861" width="9" height="13" fill="#fff"/><text x="1392.0" y="871">3</text>
<rect x="1464.5" y="844" width="9" height="13" fill="#fff"/><text x="1469.0" y="854">4</text>
<rect x="1524.5" y="850" width="9" height="13" fill="#fff"/><text x="1529.0" y="860">5</text>
<rect x="1572.5" y="870" width="9" height="13" fill="#fff"/><text x="1577.0" y="880">6</text>
<rect x="1613.5" y="849" width="9" height="13" fill="#fff"/><text x="1618.0" y="859">7</text>
<rect x="1649.5" y="875" width="9" height="13" fill="#fff"/><text x="1654.0" y="885">8</text>
<rect x="1680.5" y="897" width="9" height="13" fill="#fff"/><text x="1685.0" y="907">9</text>
</g>
<path d="M56 85.5H1899" stroke="#000" stroke-width="1.2"/><path d="M57.2 85V1011" stroke="#000" stroke-width="1.5"/>
</svg>
<div class="yl g" style="top:112.6px">30</div>
<div class="yl" style="top:145.6px">20</div>
<div class="yl g" style="top:178.7px">10</div>
<div class="yl" style="top:211.7px">0</div>
<div class="yl g" style="top:244.8px">-10</div>
<div class="yl" style="top:277.8px">-20</div>
<div class="yl g" style="top:310.9px">-30</div>
<div class="yl" style="top:343.9px">-40</div>
<div class="yl g" style="top:377.0px">-50</div>
<div class="yl" style="top:410.0px">-60</div>
<div class="yl g" style="top:443.1px">-70</div>
<div class="yl" style="top:476.1px">-80</div>
<div class="yl g" style="top:509.2px">-90</div>
<div class="yl" style="top:542.2px">-100</div>
<div class="yl g" style="top:575.3px">-110</div>
<div class="yl" style="top:608.4px">-120</div>
<div class="yl g" style="top:641.4px">-130</div>
<div class="yl" style="top:674.5px">-140</div>
<div class="yl g" style="top:707.5px">-150</div>
<div class="yl" style="top:740.6px">-160</div>
<div class="yl g" style="top:773.6px">-170</div>
<div class="yl" style="top:806.7px">-180</div>
<div class="yl g" style="top:839.7px">-190</div>
<div class="yl" style="top:872.8px">-200</div>
<div class="yl g" style="top:905.8px">-210</div>
<div class="yl" style="top:938.9px">-220</div>
<div class="yl g" style="top:971.9px">-230</div>
<div class="yl" style="top:1005.0px">-240</div>
<div class="xl" style="left:145.6px">30</div>
<div class="xl" style="left:222.3px">40</div>
<div class="xl" style="left:281.8px">50</div>
<div class="xl" style="left:330.5px">60</div>
<div class="xl" style="left:371.6px">70</div>
<div class="xl" style="left:407.2px">80</div>
<div class="xl" style="left:438.6px">90</div>
<div class="xl" style="left:466.7px">100</div>
<div class="xl" style="left:651.5px">200</div>
<div class="xl" style="left:759.6px">300</div>
<div class="xl" style="left:836.3px">400</div>
<div class="xl" style="left:895.8px">500</div>
<div class="xl" style="left:944.5px">600</div>
<div class="xl" style="left:985.6px">700</div>
<div class="xl" style="left:1021.2px">800</div>
<div class="xl" style="left:1052.6px">900</div>
<div class="xl" style="left:1080.7px">1k</div>
<div class="xl" style="left:1265.5px">2k</div>
<div class="xl" style="left:1373.6px">3k</div>
<div class="xl" style="left:1450.3px">4k</div>
<div class="xl" style="left:1509.8px">5k</div>
<div class="xl" style="left:1558.5px">6k</div>
<div class="xl" style="left:1599.6px">7k</div>
<div class="xl" style="left:1635.2px">8k</div>
<div class="xl" style="left:1666.6px">9k</div>
<div class="xl" style="left:1694.7px">10k</div>
<div class="xl g" style="left:1720.1px">11k</div>
<div class="xl g" style="left:1764.6px">13k</div>
<div class="xl g" style="left:1802.8px">15k</div>
<div class="xl g" style="left:1836.2px">17k</div>
<div class="xl" style="left:1873px;width:40px;text-align:right">20kHz</div>
<!-- vertical scrollbar -->
<div class="abs sbv" style="left:2px;top:85px;width:16px;height:927px">
 <div class="sbb" style="top:0"><svg width="14" height="14"><path d="M3 9.500h8L7 5z" fill="#333"/></svg></div>
 <div class="sbb" style="bottom:0"><svg width="14" height="14"><path d="M3 5h8L7 9.500z" fill="#333"/></svg></div>
</div>
<!-- horizontal scrollbar -->
<div class="abs sbh" style="left:57px;top:1035px;width:1842px;height:16px">
 <div class="sbb" style="left:0;width:15px"><svg width="14" height="14"><path d="M9.500 3v8L5 7z" fill="#333"/></svg></div>
 <div class="sbb" style="right:0;width:15px"><svg width="14" height="14"><path d="M5 3v8L9.500 7z" fill="#333"/></svg></div>
 <div class="thumb" style="left:710px;width:999px"></div>
</div>
<div class="abs bluebox" style="left:30px;top:78px;width:26px;height:15px;line-height:13px">40,0</div>
<div class="abs bluebox" style="left:41px;top:1015px;width:32px;height:15px;line-height:14px">20,00</div>

<div id="info" class="rbox">
<div class="ir c b" style="top:5px">997,56 Hz, -62,73 dBFS</div>
<div class="ir c" style="top:24px">Span: <b>20 .. 20.000 Hz</b></div>
<div class="ir" style="top:43px"><span class="l1">N+D:</span><span class="v1">-184,4 dBFS A</span><span class="d1"></span><span class="l2">THD:</span><span class="v2">-125,5 dB</span><span class="d2"></span></div>
<div class="ir" style="top:62px"><span class="l1">N:</span><span class="v1">-185,2 dBFS</span><span class="d1"></span><span class="l2">THD+N:</span><span class="v2">-120,7 dB</span><span class="d2"></span></div>
<div class="ir" style="top:81px"><span class="l1"></span><span class="v1"></span><span class="d1"></span><span class="l2">HHD:</span><span class="v2">-142,1 dB</span><span class="d2"></span></div>
<div class="ir" style="top:100px"><span class="l1">2nd:</span><span class="v1">-129,0 dB</span><span class="d1">109 deg</span><span class="l2">3rd:</span><span class="v2">-138,1 dB</span><span class="d2">9 deg</span></div>
<div class="ir" style="top:119px"><span class="l1">4th:</span><span class="v1">-132,9 dB</span><span class="d1">-60 deg</span><span class="l2">5th:</span><span class="v2">-134,7 dB</span><span class="d2">-14 deg</span></div>
<div class="ir" style="top:138px"><span class="l1">6th:</span><span class="v1">-140,5 dB</span><span class="d1">-44 deg</span><span class="l2">7th:</span><span class="v2">-134,4 dB</span><span class="d2">-169 deg</span></div>
<div class="ir" style="top:157px"><span class="l1">8th:</span><span class="v1">-142,2 dB</span><span class="d1">-35 deg</span><span class="l2">9th:</span><span class="v2">-148,1 dB</span><span class="d2">175 deg</span></div>
<div class="ir" style="top:81px"><span class="abs" style="left:26px">HH 10 .. 20</span></div>
</div>
<div id="lvl" class="rbox">
<div class="big">-62,73 dBFS</div>
<div class="sm" style="top:26px">-62,7 dBFS C, -62,7 dBFS A</div>
<div class="sm" style="top:38px">Peak sample: -10,79 dBFS</div>
<div class="sm" style="top:50px">-62,7 dBFS 22 - 22k UNW</div>
<div class="sm" style="top:62px">-196,8 dBFS &gt;22k</div>
</div>
<div id="rec"><div></div></div>
<div id="ctl" class="rbox">
<div class="cl" style="top:9px">Mode:</div><div class="cb" style="top:6px"><span>Spectrum</span><i><svg width="10" height="6"><path d="M0 0h10L5 6z" fill="#333"/></svg></i></div>
<div class="cl" style="top:34px">Smoothing:</div><div class="cb" style="top:31px"><span>No&nbsp; smoothing</span><i><svg width="10" height="6"><path d="M0 0h10L5 6z" fill="#333"/></svg></i></div>
<div class="cl" style="top:59px">FFT Length:</div><div class="cb" style="top:56px"><span>32k</span><i><svg width="10" height="6"><path d="M0 0h10L5 6z" fill="#333"/></svg></i></div>
<div class="cl" style="top:84px">Averages:</div><div class="cb" style="top:81px"><span>None</span><i><svg width="10" height="6"><path d="M0 0h10L5 6z" fill="#333"/></svg></i></div>
<div class="cl" style="top:109px">Window:</div><div class="cb" style="top:106px"><span>Rectangular</span><i><svg width="10" height="6"><path d="M0 0h10L5 6z" fill="#333"/></svg></i></div>
<div class="cl" style="top:134px">Max Overlap:</div><div class="cb" style="top:131px"><span>50%</span><i><svg width="10" height="6"><path d="M0 0h10L5 6z" fill="#333"/></svg></i></div>
<div class="btn" style="top:156px">Distortion settings</div>
<div class="btn" style="top:183px">Appearance</div>
<div class="btn" style="top:210px">Trace options</div>
</div>
<div id="dlg">
 <div class="dt">Distortion settings</div>
 <svg class="abs" style="left:543px;top:7px" width="12" height="12" stroke="#555" stroke-width="1"><path d="M1 1l10 10M11 1L1 11"/></svg>
 <div class="dl" style="left:7px;top:36px">Distortion High Pass (Hz):</div>
 <div class="sp" style="top:31px"><span class="sel">20</span><i><svg width="11" height="20"><path d="M2.500 7h6L5.500 3zM2.500 13h6L5.500 17z" fill="#444"/></svg></i></div>
 <div class="dl" style="left:7px;top:63px">Distortion Low Pass (Hz):</div>
 <div class="sp" style="top:58px"><span>20000</span><i><svg width="11" height="20"><path d="M2.500 7h6L5.500 3zM2.500 13h6L5.500 17z" fill="#444"/></svg></i></div>
 <div class="ck" style="left:9px;top:89px"></div><div class="dl" style="left:29px;top:90px">Manual fundamental (Vrms)</div>
 <div class="sp dis" style="top:85px"><span>1,000</span><i><svg width="11" height="20"><path d="M2.500 7h6L5.500 3zM2.500 13h6L5.500 17z" fill="#aaa"/></svg></i></div>
 <div class="ck on" style="left:9px;top:114px"><svg width="14" height="14"><path d="M3.300 6.400L6.400 10.600L11.800 0.800" fill="none" stroke="#000" stroke-width="1.700"/></svg></div><div class="dl" style="left:29px;top:115px">Use AES17-2015 standard notch</div>

 <div class="ck on" style="left:264px;top:35px"><svg width="14" height="14"><path d="M3.300 6.400L6.400 10.600L11.800 0.800" fill="none" stroke="#000" stroke-width="1.700"/></svg></div><div class="dl" style="left:284px;top:36px">Enable high pass</div>
 <div class="ck on" style="left:264px;top:62px"><svg width="14" height="14"><path d="M3.300 6.400L6.400 10.600L11.800 0.800" fill="none" stroke="#000" stroke-width="1.700"/></svg></div><div class="dl" style="left:284px;top:63px">Enable low pass</div>
 <div class="ck on" style="left:264px;top:89px"><svg width="14" height="14"><path d="M3.300 6.400L6.400 10.600L11.800 0.800" fill="none" stroke="#000" stroke-width="1.700"/></svg></div><div class="dl" style="left:284px;top:90px">Show phase of harmonics</div>
 <div class="ck on" style="left:264px;top:114px"><svg width="14" height="14"><path d="M3.300 6.400L6.400 10.600L11.800 0.800" fill="none" stroke="#000" stroke-width="1.700"/></svg></div><div class="dl" style="left:284px;top:115px">Highlight fundamental</div>

 <div class="rd" style="left:436px;top:35px"></div><div class="dl" style="left:456px;top:36px">Show distortion in %</div>
 <div class="rd on" style="left:436px;top:62px"></div><div class="dl" style="left:456px;top:63px">Show distortion in dB</div>
 <div class="ck" style="left:436px;top:89px"></div><div class="dl" style="left:456px;top:90px">Coherent averaging</div>
</div>

<div id="tbar">
<div class="abs" style="left:814px;top:0;width:36px;height:30px;background:#636363"></div>
<div class="abs" style="left:888px;top:0;width:36px;height:30px;background:#575757"></div>
<div class="ul" style="left:115px;width:28px"></div>
<div class="ul" style="left:263px;width:28px"></div>
<div class="ul" style="left:337px;width:28px"></div>
<div class="ul" style="left:485px;width:28px"></div>
<div class="ul" style="left:522px;width:28px"></div>
<div class="ul" style="left:670px;width:28px"></div>
<div class="ul" style="left:814px;width:36px"></div>

<div class="ul" style="left:929px;width:28px"></div>
<svg class="abs" style="left:0;top:0" width="1920" height="30" viewBox="0 0 1920 30">
<g fill="#fff"><path d="M10 9.200l7-1v6.500h-7zM18 8l8.500-1.300v8h-8.500zM10 15.700h7v6.500l-7-1zM18 15.700h8.500v8L18 22.400z"/></g>
<g fill="none" stroke="#fff" stroke-width="1.400"><circle cx="56.400" cy="12.600" r="5.300"/><path d="M52.700 16.500L46.500 22.800"/></g>
<g fill="none" stroke="#fff" stroke-width="1.200"><rect x="82.600" y="11.500" width="10" height="7"/><path d="M82.600 9.800v-1.900h10v1.900M82.600 20.200v1.700h10v-1.700M96.800 7.200v3.600M96.800 16.200v5.700"/><rect x="96" y="11" width="1.600" height="2.300" fill="#fff" stroke="none"/></g>
<g><circle cx="129" cy="15" r="7.500" fill="#db4437"/><path d="M129 15L122.500 18.750A7.500 7.500 0 0 0 129 22.500L132.800 16z" fill="#0f9d58"/><path d="M129 15l3.800 1-3.800 6.500A7.500 7.500 0 0 0 135.500 11.250H129z" fill="#ffcd40"/><circle cx="129" cy="15" r="3.400" fill="#fff"/><circle cx="129" cy="15" r="2.600" fill="#4285f4"/></g>
<g><path d="M161.200 9.500h11.500l.8 12.300-12.600.7z" fill="#e8dcc0"/><path d="M160.500 9h11.500l.5 12.200-13.300.8z" fill="#9fd3ee"/><path d="M161 8.200h10.500" stroke="#4a6a7a" stroke-width="1.800" stroke-dasharray="1 1"/><path d="M160.800 11.500h10.600M160.600 13.500h10.900M160.300 15.500h11.300M160.100 17.500h11.500M159.900 19.500h11.800" stroke="#d6effa" stroke-width=".7"/></g>
<g><rect x="195" y="9" width="16" height="13" fill="#111" stroke="#ccc" stroke-width="1"/><rect x="195" y="9" width="16" height="2" fill="#ddd"/><text x="196.500" y="19.500" font-family="Liberation Mono,monospace" font-size="6.500" font-weight="bold" fill="#fff">C:\_</text></g>
<g><circle cx="240" cy="15" r="7.500" fill="#1a1a1a"/><text x="240" y="19" font-family="Liberation Sans,sans-serif" font-size="11" text-anchor="middle" fill="#9a9a9a">3</text></g>
<g><path d="M269 7.500h13l2.500 2.500v12.500h-15.500z" fill="#2a4fd0"/><rect x="272" y="7.500" width="8" height="5" fill="#e4e8f4"/><rect x="277" y="8.300" width="2" height="3.400" fill="#2a4fd0"/><rect x="271" y="15" width="11" height="7.500" fill="#f4f4f4"/><text x="276.500" y="21.500" font-family="Liberation Sans,sans-serif" font-size="6.500" text-anchor="middle" fill="#333">64</text></g>
<g><rect x="312" y="8" width="10" height="14" fill="#fff" stroke="#1e7145" stroke-width=".8"/><path d="M315 11h6M315 14h6M315 17h6M315 20h6M318 9v12" stroke="#1e7145" stroke-width=".8"/><path d="M306 8.500l9.500-1.700v16.400L306 21.500z" fill="#1e7145"/><text x="310.700" y="19" font-family="Liberation Sans,sans-serif" font-size="9" font-weight="bold" text-anchor="middle" fill="#fff">X</text></g>
<g><rect x="344.500" y="9" width="13" height="14" fill="#f4f4f4" stroke="#bbb" stroke-width=".6"/><path d="M345 8h12" stroke="#999" stroke-width="1.600" stroke-dasharray="1 1"/><path d="M346 15h8M346 18h7M346 21h9" stroke="#9c6" stroke-width="1.400"/><path d="M350 18l7.500-8.500 2 1.800-7.500 8.500-2.800.8z" fill="#f0b020"/><path d="M357.500 9.500l1-1.200 2 1.800-1 1.200z" fill="#c33"/></g>
<g><rect x="387" y="8.500" width="9" height="13" fill="#dbe3f5" stroke="#2b4c9b" stroke-width=".6"/><circle cx="392.500" cy="12" r="2" fill="#3a5bb0"/><rect x="390.500" y="16" width="4" height="4" fill="#3a5bb0"/><path d="M380 8.500l9-1.700v16.400l-9-1.700z" fill="#2b4c9b"/><text x="384.500" y="19" font-family="Liberation Sans,sans-serif" font-size="9" font-weight="bold" text-anchor="middle" fill="#fff">V</text></g>
<g><circle cx="425" cy="15" r="7.800" fill="#1c2a6a" stroke="#dfe3f2" stroke-width="1.400"/><rect x="421" y="14" width="8" height="6" rx="1" fill="#e8b830"/><path d="M422.500 14v-2a2.500 2.500 0 0 1 5 0v2" fill="none" stroke="#ddd" stroke-width="1.300"/></g>
<g><ellipse cx="461" cy="16" rx="7" ry="4.500" fill="#f4f4f4" stroke="#d33" stroke-width="1.200"/><path d="M459 8l4 9M466 9l-7 8" stroke="#e33" stroke-width="1.500"/><circle cx="466" cy="19.500" r="2" fill="none" stroke="#39c" stroke-width="1.200"/><circle cx="462.500" cy="21" r="1.700" fill="none" stroke="#39c" stroke-width="1.200"/></g>
<g><path d="M494 9a4 1.800 0 0 1 8 0v6a4 1.800 0 0 1-8 0z" fill="#f2c21c"/><ellipse cx="498" cy="9" rx="4" ry="1.800" fill="#ffe27a"/><path d="M492 12v-4h3M507 12V8h-3M492 18v4h3M507 18v4h-3" fill="none" stroke="#3a7" stroke-width="1.200"/><path d="M500 16l6 6M506 16l-6 6" stroke="#38c" stroke-width="1.800"/></g>
<g><path d="M541 7l3 1.300v13.400l-3 1.300-9-8.200-3.300 2.600-1.200-.7v-7.400l1.200-.7 3.300 2.600zM541 11.500l-4.500 3.500 4.500 3.500zM528.800 12.800v4.400l2.200-2.200z" fill="#8a5cd6" fill-rule="evenodd"/></g>
<g><path d="M566 14c0-4 3.500-6.500 7.500-6.500S580 10 580 13c0 2.500-2 3-3.500 3s-2 1-1.500 2.500-.5 3-3 3c-3.500 0-6-3.500-6-7.500z" fill="#e8edf4" stroke="#9ab" stroke-width=".5"/><circle cx="569.500" cy="12" r="1.300" fill="#e33"/><circle cx="573" cy="10.300" r="1.300" fill="#3a6"/><circle cx="569.500" cy="16" r="1.300" fill="#36c"/><circle cx="572" cy="19" r="1.300" fill="#fc3"/><path d="M576 18l3.500-10" stroke="#d80" stroke-width="1.800"/><path d="M579.200 9.500l.8-3" stroke="#a52" stroke-width="2"/></g>
<g><rect x="602.500" y="8" width="11" height="9" fill="#4a8bdc" stroke="#dde" stroke-width="1"/><rect x="606" y="18" width="4" height="2" fill="#ccc"/><rect x="604" y="20" width="8" height="1.500" fill="#ccc"/><circle cx="614" cy="19.500" r="3.800" fill="#f4f4f4" stroke="#999" stroke-width=".5"/><path d="M611.800 18.300l2 1.300-2 1.300M616.200 18.300l-2 1.300 2 1.300" fill="none" stroke="#292" stroke-width="1"/></g>
<g><rect x="639" y="7" width="16" height="16" rx="2.500" fill="#0a0a14"/><text x="647" y="19.300" font-family="Liberation Sans,sans-serif" font-size="10" font-weight="bold" text-anchor="middle" fill="#fff">Br</text></g>
<g><rect x="676" y="7" width="16" height="16" fill="#1414e8"/><path d="M676 15c2.500-5 5-5 8 0s5.500 5 8 0v8h-16z" fill="#e81414"/><path d="M676 15c2.500-5 5-5 8 0s5.500 5 8 0" fill="none" stroke="#fff" stroke-width="1.300"/></g>
<g><text x="720.500" y="13.500" font-family="Liberation Sans,sans-serif" font-size="8" font-weight="bold" text-anchor="middle" fill="#9ad51a">DSP</text><path d="M713.500 22v-4l1.500-1.500 1.500 2 1.500-3 1.500 2.500 1.500-1.500 1.500 2 1.500-3 1.500 2 1.500-1v5.500z" fill="#3aa06a"/></g>
<g><circle cx="758" cy="15.500" r="7" fill="#2a2a2a" stroke="#eee" stroke-width="1.400"/><path d="M758 15.500l3.500-4" stroke="#eee" stroke-width="1.500"/><path d="M759 8.700a7 7 0 0 1 5.500 4" fill="none" stroke="#e53" stroke-width="1.600"/></g>
<g><rect x="787" y="7" width="8" height="16" fill="#fff"/><rect x="795" y="7" width="8" height="16" fill="#2fd6e8"/><path d="M800.500 10.500a5.500 5.500 0 1 0 .8 8" fill="none" stroke="#e81414" stroke-width="2.800"/><path d="M797 13l5-1.500-1 4.500z" fill="#e81414"/></g>
<g><rect x="824" y="7" width="16" height="16" fill="#3a1a8a"/><text x="832" y="13.500" font-family="Liberation Sans,sans-serif" font-size="6.500" font-weight="bold" text-anchor="middle" fill="#e8e8ff">REW</text><path d="M825 22l1.500-5 1.500 3 1.500-4.500 1.500 4 1.500-3 1.500 3.500 1.500-3 1.500 3 1.500-2v4z" fill="#4c4"/><path d="M825 22.500l2-2.500 2 2 2-3 2 3 2-2 2 2 2-1.500v2z" fill="#ec3"/></g>
<g><rect x="860.500" y="7" width="16.500" height="16" fill="#0c1016"/><rect x="860.500" y="7" width="1.300" height="16" fill="#28a0e8"/><text x="869.300" y="19.500" font-family="Liberation Sans,sans-serif" font-size="10.500" font-weight="bold" text-anchor="middle" fill="#28a0e8">PL</text></g>
<g><circle cx="906" cy="15" r="6.700" fill="#000" stroke="#fff" stroke-width="1.300"/><circle cx="906" cy="15" r="1.900" fill="#eee"/><path d="M909 18.500l3.600 3.600" stroke="#fff" stroke-width="1.600"/></g>
<g><rect x="934.500" y="9" width="15.500" height="12" fill="#f2f2f2" stroke="#fff" stroke-width=".8"/><rect x="936.500" y="11" width="5.500" height="8" fill="#3f9a7a"/><rect x="943.500" y="11" width="2.500" height="8" fill="#ddd"/><rect x="946.500" y="11" width="2" height="4" fill="#7fc47a"/></g>
<path d="M908.300 23.300v10l6-3.600z" fill="#fff" stroke="#000" stroke-width=".9"/>
<g fill="none" stroke="#fff" stroke-width="1.300">
<path d="M1622 18l5.500-5.500 5.500 5.500"/>
<rect x="1647.500" y="11" width="7" height="8" rx="1.500"/><path d="M1654.500 14l3.500-2v6l-3.500-2M1648 8.500h6M1648 21.500h6" />
<path d="M1668 9.500l15.500-2v12.500l-15.500 2z"/><path d="M1672 13.500h5l-2 2M1679 16.500h-5l2-2" stroke-width="1"/>
<path d="M1696 21.500a1 1 0 1 0 .1 0M1695 18a5 5 0 0 1 6 3M1695 14.500a8.500 8.500 0 0 1 9 6.500M1695 11a12 12 0 0 1 12 9.500" stroke-width="1.200"/>
<rect x="1720.500" y="12.500" width="10" height="7"/><path d="M1717 10v3a2 2 0 0 0 4 0v-3M1718 8.500v1.500M1720 8.500v1.500M1719 15v3"/>
<path d="M1769.500 21c-1.500 0-2-1.500-1-3l8-9c1.500-1.500 4 0 3 2l-6 8.500c-1 1.500-3 2-3.500 0M1778 14.500c4 0 4 3.500.5 4.500"/>
</g>
<circle cx="1680.500" cy="20.500" r="3.200" fill="#2f7fe0"/>
<path d="M1724 22.500l4-7 4 7z" fill="#f4c20a"/><path d="M1728 18v2.500M1728 21.300v.6" stroke="#222" stroke-width=".9"/>
<path d="M1741 17.500a3.500 3.500 0 0 1 4-4 4.200 4.200 0 0 1 7.500 1 3 3 0 0 1 .5 5.500h-10a2.500 2.500 0 0 1-2-2.500z" fill="#2a7fe0"/><circle cx="1750.500" cy="20.500" r="3.600" fill="#e02828"/><path d="M1749 19l3 3M1752 19l-3 3" stroke="#fff" stroke-width="1.100"/>
<path d="M1880 8h15v11h-5.500l-2.500 2.800v-2.800h-7z" fill="#fff"/><path d="M1883 11.500h9M1883 14h9M1883 16.500h6" stroke="#3c3c3c" stroke-width="1"/>
</svg>
<div class="tt" style="left:1799px;width:22px">ENG</div><div class="tt" style="left:1834px;width:28px">15:20</div>
</div>
<div id="tip">Qobuz</div>
</body></html>
